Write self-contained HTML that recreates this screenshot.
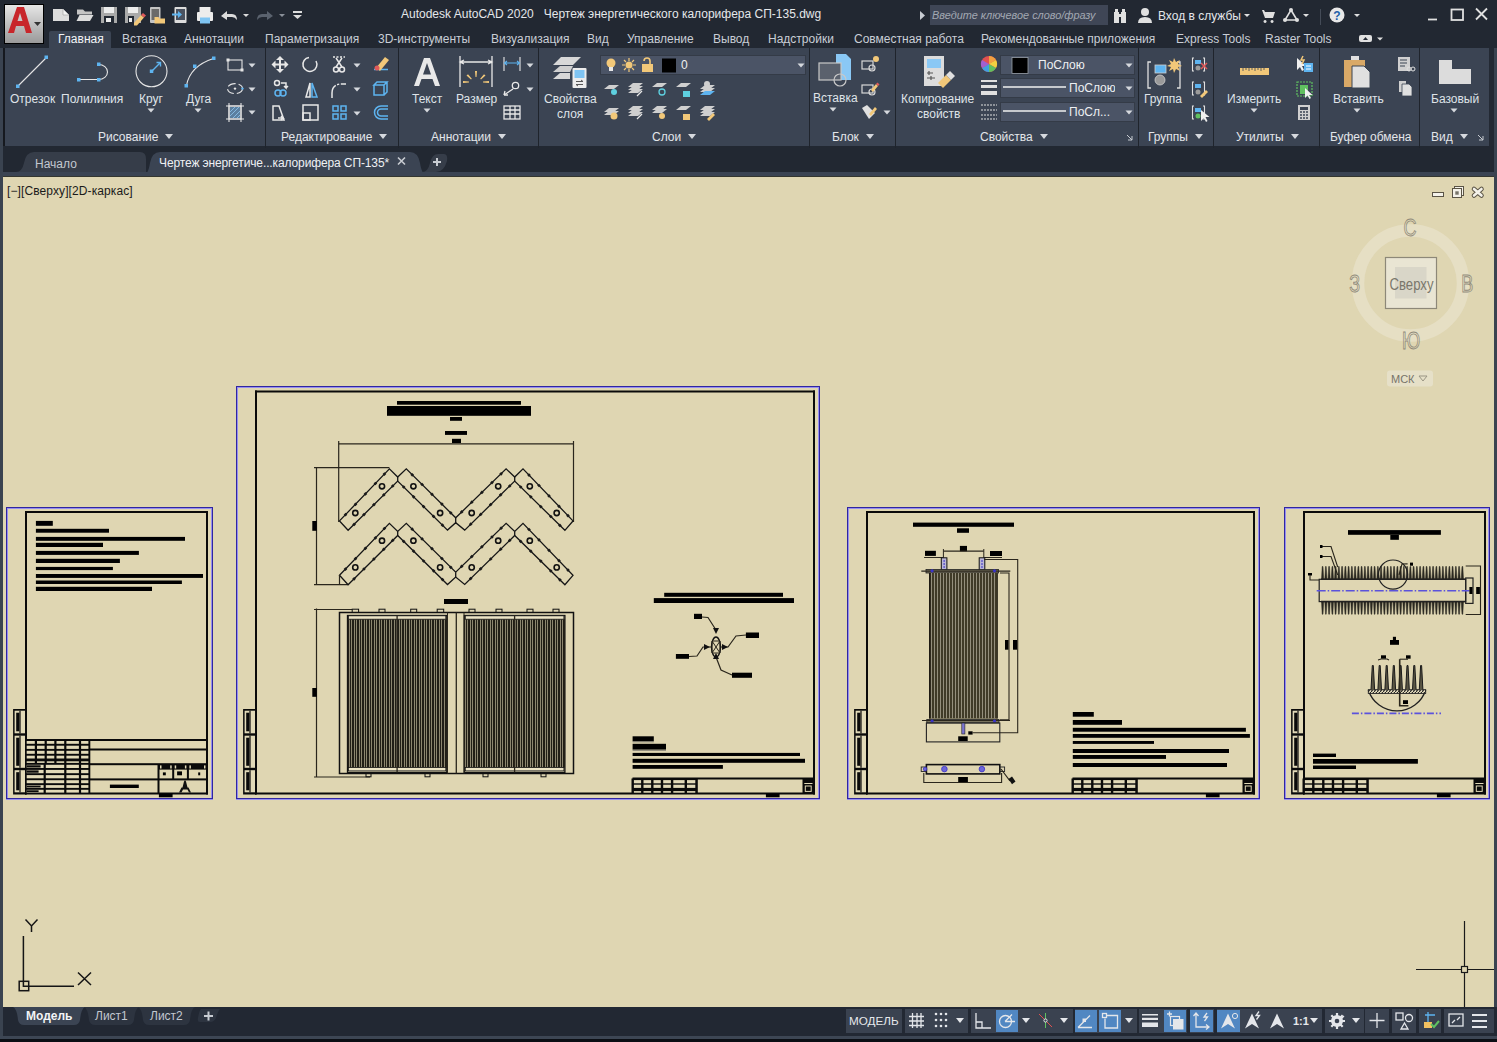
<!DOCTYPE html>
<html><head><meta charset="utf-8">
<style>
*{box-sizing:border-box;margin:0;padding:0}
html,body{width:1497px;height:1042px;overflow:hidden;background:#222832;font-family:"Liberation Sans",sans-serif;font-size:12px;color:#dfe3e8;position:relative}
.a{position:absolute}
.t{position:absolute;white-space:nowrap;line-height:14px}
#leftb{left:0;top:48px;width:3px;height:994px;background:#3a4350}
#ribbon{left:5px;top:48px;width:1484px;height:98px;background:#3b4453}
#ribbonframe{left:3px;top:48px;width:2px;height:98px;background:#16191f}
#ribdark{left:1489px;top:48px;width:5px;height:98px;background:#232933}
#rightb{left:1494px;top:48px;width:3px;height:988px;background:#3a4350}
#band{left:3px;top:146px;width:1494px;height:5px;background:#222832}
#ftabs{left:3px;top:151px;width:1494px;height:26px;background:#222832}
#canvas{left:3px;top:177px;width:1491px;height:830px;background:#dfd6b2;overflow:hidden}
#canright{left:1494px;top:177px;width:3px;height:830px;background:#3a4350}
#stat{left:3px;top:1007px;width:1494px;height:29px;background:#222833}
#stat2{left:0;top:1036px;width:1497px;height:3px;background:#3d4654}
#stat3{left:0;top:1039px;width:1497px;height:3px;background:#0b0e14}
.sep{position:absolute;top:48px;width:1px;height:100px;background:#1f242c}
.pl{position:absolute;top:130px;white-space:nowrap;line-height:14px;color:#e3e6ea}
.arr{display:inline-block;width:0;height:0;border-left:4.5px solid transparent;border-right:4.5px solid transparent;border-top:5px solid #d6d9de;vertical-align:middle;margin-left:7px;position:relative;top:-1px}
</style></head><body>
<div id="leftb" class="a"></div>
<div id="ribbon" class="a"></div>
<div id="ribbonframe" class="a"></div>
<div id="ribdark" class="a"></div>
<div id="band" class="a"></div>
<div id="ftabs" class="a"></div>
<div id="canvas" class="a"></div>
<!--CANVAS--><svg class="a" style="left:0;top:0" width="1497" height="1042" viewBox="0 0 1497 1042"><rect x="7.0" y="508.0" width="205.0" height="1.0" fill="#968ef0"/><rect x="7.0" y="508.0" width="1.0" height="290.0" fill="#968ef0"/><rect x="211.0" y="508.0" width="1.0" height="290.0" fill="#968ef0"/><rect x="6.0" y="799.0" width="207.0" height="1.0" fill="#968ef0"/><rect x="6.0" y="507.0" width="207.0" height="1.0" fill="#3026a0"/><rect x="6.0" y="507.0" width="1.0" height="292.0" fill="#3026a0"/><rect x="212.0" y="507.0" width="1.0" height="292.0" fill="#3026a0"/><rect x="6.0" y="798.0" width="207.0" height="1.0" fill="#3026a0"/><rect x="25.0" y="511.0" width="183.0" height="2.0" fill="#0a0a0a"/><rect x="25.0" y="511.0" width="2.0" height="283.5" fill="#0a0a0a"/><rect x="206.0" y="511.0" width="2.0" height="283.5" fill="#0a0a0a"/><rect x="25.0" y="792.5" width="183.0" height="2.0" fill="#0a0a0a"/><rect x="13.1" y="709.0" width="12.9" height="85.5" fill="#0a0a0a"/><rect x="14.6" y="710.7" width="10.4" height="22.6" fill="#e2dab8"/><rect x="16.2" y="712.7" width="3.2" height="18.6" fill="#0a0a0a"/><rect x="19.4" y="710.7" width="1.2" height="22.6" fill="#0a0a0a"/><rect x="14.6" y="735.7" width="10.4" height="32.1" fill="#e2dab8"/><rect x="16.2" y="737.7" width="3.2" height="28.1" fill="#0a0a0a"/><rect x="19.4" y="735.7" width="1.2" height="32.1" fill="#0a0a0a"/><rect x="14.6" y="770.2" width="10.4" height="22.1" fill="#e2dab8"/><rect x="16.2" y="772.2" width="3.2" height="18.1" fill="#0a0a0a"/><rect x="19.4" y="770.2" width="1.2" height="22.1" fill="#0a0a0a"/><rect x="26.0" y="739.0" width="181.0" height="2.0" fill="#0a0a0a"/><rect x="25.5" y="740.0" width="64.8" height="53.5" fill="#0a0a0a"/><rect x="26.7" y="741.0" width="8.1" height="2.8" fill="#e2dab8"/><rect x="37.0" y="741.0" width="7.6" height="2.8" fill="#e2dab8"/><rect x="46.8" y="741.0" width="7.5" height="2.8" fill="#e2dab8"/><rect x="56.5" y="741.0" width="7.7" height="2.8" fill="#e2dab8"/><rect x="66.4" y="741.0" width="12.5" height="2.8" fill="#e2dab8"/><rect x="81.1" y="741.0" width="7.3" height="2.8" fill="#e2dab8"/><rect x="26.7" y="745.7" width="8.1" height="3.2" fill="#e2dab8"/><rect x="37.0" y="745.7" width="7.6" height="3.2" fill="#e2dab8"/><rect x="46.8" y="745.7" width="7.5" height="3.2" fill="#e2dab8"/><rect x="56.5" y="745.7" width="7.7" height="3.2" fill="#e2dab8"/><rect x="66.4" y="745.7" width="12.5" height="3.2" fill="#e2dab8"/><rect x="81.1" y="745.7" width="7.3" height="3.2" fill="#e2dab8"/><rect x="26.7" y="750.8" width="8.1" height="3.0" fill="#e2dab8"/><rect x="37.0" y="750.8" width="7.6" height="3.0" fill="#e2dab8"/><rect x="46.8" y="750.8" width="7.5" height="3.0" fill="#e2dab8"/><rect x="56.5" y="750.8" width="7.7" height="3.0" fill="#e2dab8"/><rect x="66.4" y="750.8" width="12.5" height="3.0" fill="#e2dab8"/><rect x="81.1" y="750.8" width="7.3" height="3.0" fill="#e2dab8"/><rect x="26.7" y="755.7" width="8.1" height="2.8" fill="#e2dab8"/><rect x="37.0" y="755.7" width="7.6" height="2.8" fill="#e2dab8"/><rect x="46.8" y="755.7" width="7.5" height="2.8" fill="#e2dab8"/><rect x="56.5" y="755.7" width="7.7" height="2.8" fill="#e2dab8"/><rect x="66.4" y="755.7" width="12.5" height="2.8" fill="#e2dab8"/><rect x="81.1" y="755.7" width="7.3" height="2.8" fill="#e2dab8"/><rect x="26.7" y="761.3" width="8.1" height="1.6" fill="#e2dab8"/><rect x="37.0" y="761.3" width="7.6" height="1.6" fill="#e2dab8"/><rect x="46.8" y="761.3" width="7.5" height="1.6" fill="#e2dab8"/><rect x="56.5" y="761.3" width="7.7" height="1.6" fill="#e2dab8"/><rect x="66.4" y="761.3" width="12.5" height="1.6" fill="#e2dab8"/><rect x="81.1" y="761.3" width="7.3" height="1.6" fill="#e2dab8"/><rect x="26.7" y="764.8" width="16.9" height="3.2" fill="#e2dab8"/><rect x="26.7" y="765.3" width="13.9" height="2.2" fill="#0a0a0a"/><rect x="45.8" y="764.8" width="18.4" height="3.2" fill="#e2dab8"/><rect x="66.4" y="764.8" width="12.5" height="3.2" fill="#e2dab8"/><rect x="81.1" y="764.8" width="7.3" height="3.2" fill="#e2dab8"/><rect x="26.7" y="769.9" width="16.9" height="3.3" fill="#e2dab8"/><rect x="26.7" y="770.4" width="11.9" height="2.3" fill="#0a0a0a"/><rect x="45.8" y="769.9" width="18.4" height="3.3" fill="#e2dab8"/><rect x="66.4" y="769.9" width="12.5" height="3.3" fill="#e2dab8"/><rect x="81.1" y="769.9" width="7.3" height="3.3" fill="#e2dab8"/><rect x="26.7" y="775.1" width="16.9" height="3.2" fill="#e2dab8"/><rect x="45.8" y="775.1" width="18.4" height="3.2" fill="#e2dab8"/><rect x="66.4" y="775.1" width="12.5" height="3.2" fill="#e2dab8"/><rect x="81.1" y="775.1" width="7.3" height="3.2" fill="#e2dab8"/><rect x="26.7" y="780.2" width="16.9" height="3.0" fill="#e2dab8"/><rect x="45.8" y="780.2" width="18.4" height="3.0" fill="#e2dab8"/><rect x="66.4" y="780.2" width="12.5" height="3.0" fill="#e2dab8"/><rect x="81.1" y="780.2" width="7.3" height="3.0" fill="#e2dab8"/><rect x="26.7" y="785.1" width="16.9" height="2.8" fill="#e2dab8"/><rect x="26.7" y="785.6" width="13.9" height="1.8" fill="#0a0a0a"/><rect x="45.8" y="785.1" width="18.4" height="2.8" fill="#e2dab8"/><rect x="66.4" y="785.1" width="12.5" height="2.8" fill="#e2dab8"/><rect x="81.1" y="785.1" width="7.3" height="2.8" fill="#e2dab8"/><rect x="26.7" y="789.8" width="16.9" height="2.8" fill="#e2dab8"/><rect x="26.7" y="790.3" width="11.9" height="1.8" fill="#0a0a0a"/><rect x="45.8" y="789.8" width="18.4" height="2.8" fill="#e2dab8"/><rect x="66.4" y="789.8" width="12.5" height="2.8" fill="#e2dab8"/><rect x="81.1" y="789.8" width="7.3" height="2.8" fill="#e2dab8"/><rect x="89.3" y="748.5" width="117.7" height="2.0" fill="#0a0a0a"/><rect x="89.3" y="763.2" width="117.7" height="2.0" fill="#0a0a0a"/><rect x="89.3" y="778.4" width="117.7" height="2.0" fill="#0a0a0a"/><rect x="157.5" y="764.2" width="2.0" height="29.3" fill="#0a0a0a"/><rect x="158.5" y="764.2" width="48.5" height="5.4" fill="#0a0a0a"/><rect x="172.2" y="764.2" width="2.0" height="15.2" fill="#0a0a0a"/><rect x="160.0" y="765.4" width="1.5" height="3.1" fill="#e2dab8"/><rect x="170.2" y="765.4" width="1.5" height="3.1" fill="#e2dab8"/><rect x="186.9" y="764.2" width="2.0" height="15.2" fill="#0a0a0a"/><rect x="174.7" y="765.4" width="1.5" height="3.1" fill="#e2dab8"/><rect x="184.9" y="765.4" width="1.5" height="3.1" fill="#e2dab8"/><rect x="206.0" y="764.2" width="2.0" height="15.2" fill="#0a0a0a"/><rect x="189.4" y="765.4" width="1.5" height="3.1" fill="#e2dab8"/><rect x="204.0" y="765.4" width="1.5" height="3.1" fill="#e2dab8"/><rect x="162.9" y="772.4" width="2.9" height="2.9" fill="#000"/><rect x="177.1" y="771.4" width="4.9" height="3.9" fill="#000"/><rect x="198.2" y="772.4" width="2.0" height="2.9" fill="#000"/><rect x="109.9" y="784.6" width="28.9" height="3.4" fill="#000"/><path d="M179.0 792.5 l2.5 -5 h1 l1.5 -6 l1 -1.5 l1 1.5 l1.5 6 h1 l2.5 5 h-2 l-1.5 -3 h-4.5 l-1.5 3z" fill="#111"/><rect x="158.9" y="793.5" width="13.7" height="3.8" fill="#000"/><rect x="35.9" y="520.9" width="16.9" height="4.9" fill="#000"/><rect x="35.9" y="528.8" width="73.1" height="3.9" fill="#000"/><rect x="35.9" y="536.9" width="149.1" height="3.9" fill="#000"/><rect x="35.9" y="542.8" width="67.1" height="4.2" fill="#000"/><rect x="35.9" y="550.9" width="103.0" height="4.0" fill="#000"/><rect x="35.9" y="558.8" width="84.0" height="4.2" fill="#000"/><rect x="35.9" y="566.9" width="77.0" height="3.2" fill="#000"/><rect x="35.9" y="574.0" width="167.1" height="3.9" fill="#000"/><rect x="35.9" y="580.5" width="146.0" height="3.5" fill="#000"/><rect x="35.9" y="586.8" width="116.1" height="4.2" fill="#000"/><rect x="237.0" y="387.0" width="582.0" height="1.0" fill="#968ef0"/><rect x="237.0" y="387.0" width="1.0" height="411.0" fill="#968ef0"/><rect x="818.0" y="387.0" width="1.0" height="411.0" fill="#968ef0"/><rect x="236.0" y="799.0" width="584.0" height="1.0" fill="#968ef0"/><rect x="236.0" y="386.0" width="584.0" height="1.0" fill="#3026a0"/><rect x="236.0" y="386.0" width="1.0" height="413.0" fill="#3026a0"/><rect x="819.0" y="386.0" width="1.0" height="413.0" fill="#3026a0"/><rect x="236.0" y="798.0" width="584.0" height="1.0" fill="#3026a0"/><rect x="255.0" y="390.5" width="560.0" height="2.0" fill="#0a0a0a"/><rect x="255.0" y="390.5" width="2.0" height="404.0" fill="#0a0a0a"/><rect x="813.0" y="390.5" width="2.0" height="404.0" fill="#0a0a0a"/><rect x="255.0" y="792.5" width="560.0" height="2.0" fill="#0a0a0a"/><rect x="243.1" y="709.0" width="12.9" height="85.5" fill="#0a0a0a"/><rect x="244.6" y="710.7" width="10.4" height="22.6" fill="#e2dab8"/><rect x="246.2" y="712.7" width="3.2" height="18.6" fill="#0a0a0a"/><rect x="249.4" y="710.7" width="1.2" height="22.6" fill="#0a0a0a"/><rect x="244.6" y="735.7" width="10.4" height="32.1" fill="#e2dab8"/><rect x="246.2" y="737.7" width="3.2" height="28.1" fill="#0a0a0a"/><rect x="249.4" y="735.7" width="1.2" height="32.1" fill="#0a0a0a"/><rect x="244.6" y="770.2" width="10.4" height="22.1" fill="#e2dab8"/><rect x="246.2" y="772.2" width="3.2" height="18.1" fill="#0a0a0a"/><rect x="249.4" y="770.2" width="1.2" height="22.1" fill="#0a0a0a"/><rect x="632.5" y="777.5" width="181.5" height="2.0" fill="#0a0a0a"/><rect x="631.5" y="778.5" width="66.3" height="15.0" fill="#0a0a0a"/><rect x="633.9" y="780.1" width="7.2" height="3.2" fill="#e2dab8"/><rect x="633.9" y="784.7" width="7.2" height="3.2" fill="#e2dab8"/><rect x="633.9" y="791.1" width="7.2" height="1.6" fill="#e2dab8"/><rect x="643.5" y="780.1" width="7.6" height="3.2" fill="#e2dab8"/><rect x="643.5" y="784.7" width="7.6" height="3.2" fill="#e2dab8"/><rect x="643.5" y="791.1" width="7.6" height="1.6" fill="#e2dab8"/><rect x="653.5" y="780.1" width="7.3" height="3.2" fill="#e2dab8"/><rect x="653.5" y="784.7" width="7.3" height="3.2" fill="#e2dab8"/><rect x="653.5" y="791.1" width="7.3" height="1.6" fill="#e2dab8"/><rect x="663.2" y="780.1" width="7.7" height="3.2" fill="#e2dab8"/><rect x="663.2" y="784.7" width="7.7" height="3.2" fill="#e2dab8"/><rect x="663.2" y="791.1" width="7.7" height="1.6" fill="#e2dab8"/><rect x="673.3" y="780.1" width="11.3" height="3.2" fill="#e2dab8"/><rect x="673.3" y="784.7" width="11.3" height="3.2" fill="#e2dab8"/><rect x="673.3" y="791.1" width="11.3" height="1.6" fill="#e2dab8"/><rect x="687.0" y="780.1" width="8.3" height="3.2" fill="#e2dab8"/><rect x="687.0" y="784.7" width="8.3" height="3.2" fill="#e2dab8"/><rect x="687.0" y="791.1" width="8.3" height="1.6" fill="#e2dab8"/><rect x="802.5" y="778.5" width="11.5" height="15.0" fill="#0a0a0a"/><rect x="804.3" y="783.0" width="8.2" height="1.0" fill="#e2dab8"/><rect x="805.3" y="786.0" width="5.9" height="5.4" fill="none" stroke="#e2dab8" stroke-width="1"/><rect x="765.9" y="793.5" width="13.7" height="3.8" fill="#000"/><rect x="397.0" y="401.0" width="124.0" height="3.7" fill="#000"/><rect x="387.0" y="406.0" width="144.0" height="9.8" fill="#000"/><rect x="450.0" y="417.0" width="12.0" height="3.8" fill="#000"/><rect x="445.0" y="431.0" width="22.0" height="3.9" fill="#000"/><rect x="452.0" y="438.8" width="9.0" height="4.2" fill="#000"/><path d="M338.7 443.8 L573.5 443.8" stroke="#2a261c" stroke-width="1.2" fill="none" /><path d="M338.7 441.0 L338.7 522.0" stroke="#2a261c" stroke-width="1.2" fill="none" /><path d="M573.5 441.0 L573.5 522.0" stroke="#2a261c" stroke-width="1.2" fill="none" /><path d="M316.5 467.7 L316.5 584.6" stroke="#2a261c" stroke-width="1.2" fill="none" /><path d="M314.0 467.7 L389.4 467.7" stroke="#2a261c" stroke-width="1.2" fill="none" /><path d="M314.0 584.6 L348.0 584.6" stroke="#2a261c" stroke-width="1.2" fill="none" /><rect x="312.3" y="521.0" width="4.5" height="9.8" fill="#000"/><path d="M339.5 520.9 L389.4 468.9 L397.7 477.0 L406.3 468.9 L455.7 517.8 L506.1 468.9 L514.7 477.0 L523.0 468.9 L573.0 520.9 L564.9 530.3 L514.7 481.1 L464.7 530.1 L455.7 522.7 L447.5 530.1 L397.7 481.1 L348.1 530.3Z" fill="none" stroke="#151515" stroke-width="1.3" stroke-linejoin="miter"/><path d="M397.7 477.0 L397.7 481.1" stroke="#151515" stroke-width="1.3" fill="none" /><path d="M455.7 517.8 L455.7 522.7" stroke="#151515" stroke-width="1.3" fill="none" /><path d="M514.7 477.0 L514.7 481.1" stroke="#151515" stroke-width="1.3" fill="none" /><circle cx="382" cy="486.3" r="2.6" fill="none" stroke="#111" stroke-width="1.6"/><circle cx="355.3" cy="513" r="2.6" fill="none" stroke="#111" stroke-width="1.6"/><circle cx="413.4" cy="486.3" r="2.6" fill="none" stroke="#111" stroke-width="1.6"/><circle cx="440.1" cy="513" r="2.6" fill="none" stroke="#111" stroke-width="1.6"/><circle cx="498.2" cy="486.3" r="2.6" fill="none" stroke="#111" stroke-width="1.6"/><circle cx="471.7" cy="513" r="2.6" fill="none" stroke="#111" stroke-width="1.6"/><circle cx="529.8" cy="486.3" r="2.6" fill="none" stroke="#111" stroke-width="1.6"/><circle cx="556.7" cy="513" r="2.6" fill="none" stroke="#111" stroke-width="1.6"/><rect x="344.2" y="513.4" width="2.6" height="2.6" fill="#1a1a1a" transform="rotate(45 345.5 514.7)"/><rect x="354.2" y="503.0" width="2.6" height="2.6" fill="#1a1a1a" transform="rotate(45 355.5 504.3)"/><rect x="364.1" y="492.6" width="2.6" height="2.6" fill="#1a1a1a" transform="rotate(45 365.4 493.9)"/><rect x="374.1" y="482.2" width="2.6" height="2.6" fill="#1a1a1a" transform="rotate(45 375.4 483.5)"/><rect x="383.1" y="472.8" width="2.6" height="2.6" fill="#1a1a1a" transform="rotate(45 384.4 474.1)"/><rect x="352.8" y="523.1" width="2.6" height="2.6" fill="#1a1a1a" transform="rotate(45 354.1 524.4)"/><rect x="362.7" y="513.3" width="2.6" height="2.6" fill="#1a1a1a" transform="rotate(45 364.0 514.6)"/><rect x="372.6" y="503.4" width="2.6" height="2.6" fill="#1a1a1a" transform="rotate(45 373.9 504.7)"/><rect x="382.5" y="493.6" width="2.6" height="2.6" fill="#1a1a1a" transform="rotate(45 383.8 494.9)"/><rect x="391.4" y="484.7" width="2.6" height="2.6" fill="#1a1a1a" transform="rotate(45 392.7 486.0)"/><rect x="410.9" y="473.5" width="2.6" height="2.6" fill="#1a1a1a" transform="rotate(45 412.2 474.8)"/><rect x="420.8" y="483.2" width="2.6" height="2.6" fill="#1a1a1a" transform="rotate(45 422.1 484.5)"/><rect x="430.7" y="493.0" width="2.6" height="2.6" fill="#1a1a1a" transform="rotate(45 432.0 494.3)"/><rect x="440.6" y="502.8" width="2.6" height="2.6" fill="#1a1a1a" transform="rotate(45 441.9 504.1)"/><rect x="449.5" y="511.6" width="2.6" height="2.6" fill="#1a1a1a" transform="rotate(45 450.8 512.9)"/><rect x="402.4" y="485.7" width="2.6" height="2.6" fill="#1a1a1a" transform="rotate(45 403.7 487.0)"/><rect x="412.3" y="495.5" width="2.6" height="2.6" fill="#1a1a1a" transform="rotate(45 413.6 496.8)"/><rect x="422.3" y="505.3" width="2.6" height="2.6" fill="#1a1a1a" transform="rotate(45 423.6 506.6)"/><rect x="432.3" y="515.1" width="2.6" height="2.6" fill="#1a1a1a" transform="rotate(45 433.6 516.4)"/><rect x="441.2" y="523.9" width="2.6" height="2.6" fill="#1a1a1a" transform="rotate(45 442.5 525.2)"/><rect x="460.4" y="510.6" width="2.6" height="2.6" fill="#1a1a1a" transform="rotate(45 461.7 511.9)"/><rect x="470.5" y="500.9" width="2.6" height="2.6" fill="#1a1a1a" transform="rotate(45 471.8 502.2)"/><rect x="480.6" y="491.1" width="2.6" height="2.6" fill="#1a1a1a" transform="rotate(45 481.9 492.4)"/><rect x="490.7" y="481.3" width="2.6" height="2.6" fill="#1a1a1a" transform="rotate(45 492.0 482.6)"/><rect x="499.8" y="472.5" width="2.6" height="2.6" fill="#1a1a1a" transform="rotate(45 501.1 473.8)"/><rect x="469.4" y="522.9" width="2.6" height="2.6" fill="#1a1a1a" transform="rotate(45 470.7 524.2)"/><rect x="479.4" y="513.1" width="2.6" height="2.6" fill="#1a1a1a" transform="rotate(45 480.7 514.4)"/><rect x="489.4" y="503.3" width="2.6" height="2.6" fill="#1a1a1a" transform="rotate(45 490.7 504.6)"/><rect x="499.4" y="493.5" width="2.6" height="2.6" fill="#1a1a1a" transform="rotate(45 500.7 494.8)"/><rect x="508.4" y="484.7" width="2.6" height="2.6" fill="#1a1a1a" transform="rotate(45 509.7 486.0)"/><rect x="527.7" y="473.8" width="2.6" height="2.6" fill="#1a1a1a" transform="rotate(45 529.0 475.1)"/><rect x="537.7" y="484.2" width="2.6" height="2.6" fill="#1a1a1a" transform="rotate(45 539.0 485.5)"/><rect x="547.7" y="494.6" width="2.6" height="2.6" fill="#1a1a1a" transform="rotate(45 549.0 495.9)"/><rect x="557.7" y="505.0" width="2.6" height="2.6" fill="#1a1a1a" transform="rotate(45 559.0 506.3)"/><rect x="566.7" y="514.4" width="2.6" height="2.6" fill="#1a1a1a" transform="rotate(45 568.0 515.7)"/><rect x="519.4" y="485.7" width="2.6" height="2.6" fill="#1a1a1a" transform="rotate(45 520.7 487.0)"/><rect x="529.5" y="495.5" width="2.6" height="2.6" fill="#1a1a1a" transform="rotate(45 530.8 496.8)"/><rect x="539.5" y="505.4" width="2.6" height="2.6" fill="#1a1a1a" transform="rotate(45 540.8 506.7)"/><rect x="549.5" y="515.2" width="2.6" height="2.6" fill="#1a1a1a" transform="rotate(45 550.8 516.5)"/><rect x="558.6" y="524.1" width="2.6" height="2.6" fill="#1a1a1a" transform="rotate(45 559.9 525.4)"/><path d="M339.5 575.3 L389.4 523.3 L397.7 531.4 L406.3 523.3 L455.7 572.2 L506.1 523.3 L514.7 531.4 L523.0 523.3 L573.0 575.3 L564.9 584.7 L514.7 535.5 L464.7 584.5 L455.7 577.1 L447.5 584.5 L397.7 535.5 L348.1 584.7Z" fill="none" stroke="#151515" stroke-width="1.3" stroke-linejoin="miter"/><path d="M397.7 531.4 L397.7 535.5" stroke="#151515" stroke-width="1.3" fill="none" /><path d="M455.7 572.2 L455.7 577.1" stroke="#151515" stroke-width="1.3" fill="none" /><path d="M514.7 531.4 L514.7 535.5" stroke="#151515" stroke-width="1.3" fill="none" /><circle cx="382" cy="540.7" r="2.6" fill="none" stroke="#111" stroke-width="1.6"/><circle cx="355.3" cy="567.4" r="2.6" fill="none" stroke="#111" stroke-width="1.6"/><circle cx="413.4" cy="540.7" r="2.6" fill="none" stroke="#111" stroke-width="1.6"/><circle cx="440.1" cy="567.4" r="2.6" fill="none" stroke="#111" stroke-width="1.6"/><circle cx="498.2" cy="540.7" r="2.6" fill="none" stroke="#111" stroke-width="1.6"/><circle cx="471.7" cy="567.4" r="2.6" fill="none" stroke="#111" stroke-width="1.6"/><circle cx="529.8" cy="540.7" r="2.6" fill="none" stroke="#111" stroke-width="1.6"/><circle cx="556.7" cy="567.4" r="2.6" fill="none" stroke="#111" stroke-width="1.6"/><rect x="344.2" y="567.8" width="2.6" height="2.6" fill="#1a1a1a" transform="rotate(45 345.5 569.1)"/><rect x="354.2" y="557.4" width="2.6" height="2.6" fill="#1a1a1a" transform="rotate(45 355.5 558.7)"/><rect x="364.1" y="547.0" width="2.6" height="2.6" fill="#1a1a1a" transform="rotate(45 365.4 548.3)"/><rect x="374.1" y="536.6" width="2.6" height="2.6" fill="#1a1a1a" transform="rotate(45 375.4 537.9)"/><rect x="383.1" y="527.2" width="2.6" height="2.6" fill="#1a1a1a" transform="rotate(45 384.4 528.5)"/><rect x="352.8" y="577.5" width="2.6" height="2.6" fill="#1a1a1a" transform="rotate(45 354.1 578.8)"/><rect x="362.7" y="567.7" width="2.6" height="2.6" fill="#1a1a1a" transform="rotate(45 364.0 569.0)"/><rect x="372.6" y="557.8" width="2.6" height="2.6" fill="#1a1a1a" transform="rotate(45 373.9 559.1)"/><rect x="382.5" y="548.0" width="2.6" height="2.6" fill="#1a1a1a" transform="rotate(45 383.8 549.3)"/><rect x="391.4" y="539.1" width="2.6" height="2.6" fill="#1a1a1a" transform="rotate(45 392.7 540.4)"/><rect x="410.9" y="527.9" width="2.6" height="2.6" fill="#1a1a1a" transform="rotate(45 412.2 529.2)"/><rect x="420.8" y="537.6" width="2.6" height="2.6" fill="#1a1a1a" transform="rotate(45 422.1 538.9)"/><rect x="430.7" y="547.4" width="2.6" height="2.6" fill="#1a1a1a" transform="rotate(45 432.0 548.7)"/><rect x="440.6" y="557.2" width="2.6" height="2.6" fill="#1a1a1a" transform="rotate(45 441.9 558.5)"/><rect x="449.5" y="566.0" width="2.6" height="2.6" fill="#1a1a1a" transform="rotate(45 450.8 567.3)"/><rect x="402.4" y="540.1" width="2.6" height="2.6" fill="#1a1a1a" transform="rotate(45 403.7 541.4)"/><rect x="412.3" y="549.9" width="2.6" height="2.6" fill="#1a1a1a" transform="rotate(45 413.6 551.2)"/><rect x="422.3" y="559.7" width="2.6" height="2.6" fill="#1a1a1a" transform="rotate(45 423.6 561.0)"/><rect x="432.3" y="569.5" width="2.6" height="2.6" fill="#1a1a1a" transform="rotate(45 433.6 570.8)"/><rect x="441.2" y="578.3" width="2.6" height="2.6" fill="#1a1a1a" transform="rotate(45 442.5 579.6)"/><rect x="460.4" y="565.0" width="2.6" height="2.6" fill="#1a1a1a" transform="rotate(45 461.7 566.3)"/><rect x="470.5" y="555.3" width="2.6" height="2.6" fill="#1a1a1a" transform="rotate(45 471.8 556.6)"/><rect x="480.6" y="545.5" width="2.6" height="2.6" fill="#1a1a1a" transform="rotate(45 481.9 546.8)"/><rect x="490.7" y="535.7" width="2.6" height="2.6" fill="#1a1a1a" transform="rotate(45 492.0 537.0)"/><rect x="499.8" y="526.9" width="2.6" height="2.6" fill="#1a1a1a" transform="rotate(45 501.1 528.2)"/><rect x="469.4" y="577.3" width="2.6" height="2.6" fill="#1a1a1a" transform="rotate(45 470.7 578.6)"/><rect x="479.4" y="567.5" width="2.6" height="2.6" fill="#1a1a1a" transform="rotate(45 480.7 568.8)"/><rect x="489.4" y="557.7" width="2.6" height="2.6" fill="#1a1a1a" transform="rotate(45 490.7 559.0)"/><rect x="499.4" y="547.9" width="2.6" height="2.6" fill="#1a1a1a" transform="rotate(45 500.7 549.2)"/><rect x="508.4" y="539.1" width="2.6" height="2.6" fill="#1a1a1a" transform="rotate(45 509.7 540.4)"/><rect x="527.7" y="528.2" width="2.6" height="2.6" fill="#1a1a1a" transform="rotate(45 529.0 529.5)"/><rect x="537.7" y="538.6" width="2.6" height="2.6" fill="#1a1a1a" transform="rotate(45 539.0 539.9)"/><rect x="547.7" y="549.0" width="2.6" height="2.6" fill="#1a1a1a" transform="rotate(45 549.0 550.3)"/><rect x="557.7" y="559.4" width="2.6" height="2.6" fill="#1a1a1a" transform="rotate(45 559.0 560.7)"/><rect x="566.7" y="568.8" width="2.6" height="2.6" fill="#1a1a1a" transform="rotate(45 568.0 570.1)"/><rect x="519.4" y="540.1" width="2.6" height="2.6" fill="#1a1a1a" transform="rotate(45 520.7 541.4)"/><rect x="529.5" y="549.9" width="2.6" height="2.6" fill="#1a1a1a" transform="rotate(45 530.8 551.2)"/><rect x="539.5" y="559.8" width="2.6" height="2.6" fill="#1a1a1a" transform="rotate(45 540.8 561.1)"/><rect x="549.5" y="569.6" width="2.6" height="2.6" fill="#1a1a1a" transform="rotate(45 550.8 570.9)"/><rect x="558.6" y="578.5" width="2.6" height="2.6" fill="#1a1a1a" transform="rotate(45 559.9 579.8)"/><path d="M339.5 575.0 L339.5 584.6" stroke="#2a261c" stroke-width="1.2" fill="none" /><rect x="444.0" y="599.0" width="24.0" height="5.0" fill="#000"/><path d="M316.5 608.5 L316.5 777.0" stroke="#2a261c" stroke-width="1.2" fill="none" /><path d="M314.0 609.5 L352.0 609.5" stroke="#2a261c" stroke-width="1.1" fill="none" /><path d="M314.0 777.0 L370.0 777.0" stroke="#2a261c" stroke-width="1.1" fill="none" /><rect x="312.3" y="688.0" width="4.5" height="8.8" fill="#000"/><defs><pattern id="fins" width="4.8" height="10" patternUnits="userSpaceOnUse"><rect width="4.8" height="10" fill="#24211a"/><rect x="0.6" width="0.8" height="10" fill="#8c866e"/><rect x="3.0" width="0.8" height="10" fill="#6f6a56"/></pattern><pattern id="fins2" width="3.4" height="10" patternUnits="userSpaceOnUse"><rect width="3.4" height="10" fill="#4a4637"/><rect x="1.2" width="1.1" height="10" fill="#a8a28a"/></pattern><pattern id="fins3" width="3.2" height="6" patternUnits="userSpaceOnUse"><path d="M0.3 6 L1.2 0 L2 6Z" fill="#2a281f"/></pattern><pattern id="hatch" width="3" height="4" patternUnits="userSpaceOnUse"><rect width="3" height="4" fill="#e8e0c0"/><path d="M0 4 L3 0" stroke="#222" stroke-width="1.2"/></pattern></defs><rect x="339.5" y="612.5" width="234" height="161" fill="none" stroke="#111" stroke-width="1.5"/><rect x="352.2" y="609.2" width="6.400000000000034" height="3.3" fill="none" stroke="#111" stroke-width="1"/><rect x="379" y="609.2" width="6" height="3.3" fill="none" stroke="#111" stroke-width="1"/><rect x="410.7" y="609.2" width="6.0" height="3.3" fill="none" stroke="#111" stroke-width="1"/><rect x="437.2" y="609.2" width="6.5" height="3.3" fill="none" stroke="#111" stroke-width="1"/><rect x="469" y="609.2" width="6" height="3.3" fill="none" stroke="#111" stroke-width="1"/><rect x="496" y="609.2" width="6" height="3.3" fill="none" stroke="#111" stroke-width="1"/><rect x="527" y="609.2" width="6" height="3.3" fill="none" stroke="#111" stroke-width="1"/><rect x="553" y="609.2" width="6" height="3.3" fill="none" stroke="#111" stroke-width="1"/><rect x="366" y="773.5" width="5" height="3.3" fill="none" stroke="#111" stroke-width="1"/><rect x="425" y="773.5" width="5" height="3.3" fill="none" stroke="#111" stroke-width="1"/><rect x="483" y="773.5" width="5" height="3.3" fill="none" stroke="#111" stroke-width="1"/><rect x="541" y="773.5" width="5" height="3.3" fill="none" stroke="#111" stroke-width="1"/><rect x="347.5" y="614.5" width="99.3" height="160.5" fill="none"/><rect x="347.5" y="615.5" width="99.30000000000001" height="157" fill="none" stroke="#111" stroke-width="1.3"/><rect x="347.5" y="619.2" width="99.3" height="148.3" fill="#211e16"/><path d="M349.5 619.2 V767.5 M351.5 619.2 V767.5 M354.5 619.2 V767.5 M356.5 619.2 V767.5 M359.5 619.2 V767.5 M361.5 619.2 V767.5 M364.5 619.2 V767.5 M366.5 619.2 V767.5 M369.5 619.2 V767.5 M371.5 619.2 V767.5 M374.5 619.2 V767.5 M376.5 619.2 V767.5 M379.5 619.2 V767.5 M381.5 619.2 V767.5 M384.5 619.2 V767.5 M386.5 619.2 V767.5 M389.5 619.2 V767.5 M391.5 619.2 V767.5 M394.5 619.2 V767.5 M396.5 619.2 V767.5 M399.5 619.2 V767.5 M401.5 619.2 V767.5 M404.5 619.2 V767.5 M406.5 619.2 V767.5 M409.5 619.2 V767.5 M411.5 619.2 V767.5 M414.5 619.2 V767.5 M416.5 619.2 V767.5 M419.5 619.2 V767.5 M421.5 619.2 V767.5 M424.5 619.2 V767.5 M426.5 619.2 V767.5 M429.5 619.2 V767.5 M431.5 619.2 V767.5 M434.5 619.2 V767.5 M436.5 619.2 V767.5 M439.5 619.2 V767.5 M441.5 619.2 V767.5 M444.5 619.2 V767.5" stroke="#8c866f" stroke-width="1"/><rect x="348.5" y="615.8" width="97.30000000000001" height="3.4" fill="#ece4c6" stroke="#111" stroke-width="0.8"/><rect x="348.5" y="767.5" width="97.30000000000001" height="3.4" fill="#ece4c6" stroke="#111" stroke-width="0.8"/><path d="M397.1 615.5 L397.1 772.5" stroke="#2a261c" stroke-width="1.3" fill="none" /><rect x="464.3" y="614.5" width="100.6" height="160.5" fill="none"/><rect x="464.3" y="615.5" width="100.59999999999997" height="157" fill="none" stroke="#111" stroke-width="1.3"/><rect x="464.3" y="619.2" width="100.6" height="148.3" fill="#211e16"/><path d="M465.5 619.2 V767.5 M467.5 619.2 V767.5 M470.5 619.2 V767.5 M472.5 619.2 V767.5 M475.5 619.2 V767.5 M477.5 619.2 V767.5 M480.5 619.2 V767.5 M482.5 619.2 V767.5 M485.5 619.2 V767.5 M487.5 619.2 V767.5 M490.5 619.2 V767.5 M492.5 619.2 V767.5 M495.5 619.2 V767.5 M497.5 619.2 V767.5 M500.5 619.2 V767.5 M502.5 619.2 V767.5 M505.5 619.2 V767.5 M507.5 619.2 V767.5 M510.5 619.2 V767.5 M512.5 619.2 V767.5 M515.5 619.2 V767.5 M517.5 619.2 V767.5 M520.5 619.2 V767.5 M522.5 619.2 V767.5 M525.5 619.2 V767.5 M527.5 619.2 V767.5 M530.5 619.2 V767.5 M532.5 619.2 V767.5 M535.5 619.2 V767.5 M537.5 619.2 V767.5 M540.5 619.2 V767.5 M542.5 619.2 V767.5 M545.5 619.2 V767.5 M547.5 619.2 V767.5 M550.5 619.2 V767.5 M552.5 619.2 V767.5 M555.5 619.2 V767.5 M557.5 619.2 V767.5 M560.5 619.2 V767.5 M562.5 619.2 V767.5" stroke="#8c866f" stroke-width="1"/><rect x="465.3" y="615.8" width="98.59999999999997" height="3.4" fill="#ece4c6" stroke="#111" stroke-width="0.8"/><rect x="465.3" y="767.5" width="98.59999999999997" height="3.4" fill="#ece4c6" stroke="#111" stroke-width="0.8"/><path d="M514.6 615.5 L514.6 772.5" stroke="#2a261c" stroke-width="1.3" fill="none" /><path d="M456.3 612.5 L456.3 773.5" stroke="#2a261c" stroke-width="1.3" fill="none" /><path d="M447.5 612.5 L447.5 773.5" stroke="#2a261c" stroke-width="1" fill="none" /><path d="M464.0 612.5 L464.0 773.5" stroke="#2a261c" stroke-width="1" fill="none" /><rect x="664.2" y="592.8" width="118.8" height="4.0" fill="#000"/><rect x="653.8" y="598.1" width="140.2" height="4.9" fill="#000"/><ellipse cx="716" cy="647" rx="4.5" ry="10" fill="none" stroke="#111" stroke-width="1.4"/><path d="M712.0 641.0 L720.0 653.0" stroke="#2a261c" stroke-width="1" fill="none" /><path d="M720.0 641.0 L712.0 653.0" stroke="#2a261c" stroke-width="1" fill="none" /><path d="M712.0 641.0 L720.0 641.0 L720.0 653.0 L712.0 653.0 L712.0 641.0" stroke="#2a261c" stroke-width="1" fill="none" /><path d="M696.0 616.5 L708.0 617.5 L716.0 630.0" stroke="#2a261c" stroke-width="1.2" fill="none" /><path d="M713 628 h6 l-3 6z" fill="#111"/><path d="M716.0 657.0 L721.0 670.0 L732.0 675.0" stroke="#2a261c" stroke-width="1.2" fill="none" /><path d="M713 659 h6 l-3 -6z" fill="#111"/><path d="M689.0 656.5 L697.0 656.0 L703.0 647.0 L711.0 647.0" stroke="#2a261c" stroke-width="1.2" fill="none" /><path d="M704 644 v6 l6 -3z" fill="#111"/><path d="M721.0 647.0 L728.0 647.0 L736.0 636.0 L746.0 635.0" stroke="#2a261c" stroke-width="1.2" fill="none" /><path d="M722 644 v6 l6 -3z" fill="#111"/><rect x="694.0" y="613.8" width="8.0" height="5.2" fill="#000"/><rect x="745.9" y="632.5" width="13.1" height="5.5" fill="#000"/><rect x="675.9" y="654.0" width="13.1" height="4.8" fill="#000"/><rect x="732.0" y="672.7" width="20.0" height="5.1" fill="#000"/><rect x="632.6" y="736.3" width="21.2" height="4.9" fill="#000"/><rect x="632.6" y="743.8" width="33.4" height="5.8" fill="#000"/><path d="M632.6 741.8 L653.8 741.8" stroke="#555" stroke-width="0.8" fill="none" /><path d="M632.6 750.2 L666.0 750.2" stroke="#555" stroke-width="0.8" fill="none" /><rect x="632.6" y="752.9" width="167.4" height="3.1" fill="#000"/><rect x="632.6" y="758.8" width="172.4" height="4.0" fill="#000"/><rect x="632.6" y="765.0" width="90.3" height="3.8" fill="#000"/><rect x="848.0" y="508.0" width="411.0" height="1.0" fill="#968ef0"/><rect x="848.0" y="508.0" width="1.0" height="290.0" fill="#968ef0"/><rect x="1258.0" y="508.0" width="1.0" height="290.0" fill="#968ef0"/><rect x="847.0" y="799.0" width="413.0" height="1.0" fill="#968ef0"/><rect x="847.0" y="507.0" width="413.0" height="1.0" fill="#3026a0"/><rect x="847.0" y="507.0" width="1.0" height="292.0" fill="#3026a0"/><rect x="1259.0" y="507.0" width="1.0" height="292.0" fill="#3026a0"/><rect x="847.0" y="798.0" width="413.0" height="1.0" fill="#3026a0"/><rect x="866.0" y="511.0" width="389.0" height="2.0" fill="#0a0a0a"/><rect x="866.0" y="511.0" width="2.0" height="283.5" fill="#0a0a0a"/><rect x="1253.0" y="511.0" width="2.0" height="283.5" fill="#0a0a0a"/><rect x="866.0" y="792.5" width="389.0" height="2.0" fill="#0a0a0a"/><rect x="854.1" y="709.0" width="12.9" height="85.5" fill="#0a0a0a"/><rect x="855.6" y="710.7" width="10.4" height="22.6" fill="#e2dab8"/><rect x="857.2" y="712.7" width="3.2" height="18.6" fill="#0a0a0a"/><rect x="860.4" y="710.7" width="1.2" height="22.6" fill="#0a0a0a"/><rect x="855.6" y="735.7" width="10.4" height="32.1" fill="#e2dab8"/><rect x="857.2" y="737.7" width="3.2" height="28.1" fill="#0a0a0a"/><rect x="860.4" y="735.7" width="1.2" height="32.1" fill="#0a0a0a"/><rect x="855.6" y="770.2" width="10.4" height="22.1" fill="#e2dab8"/><rect x="857.2" y="772.2" width="3.2" height="18.1" fill="#0a0a0a"/><rect x="860.4" y="770.2" width="1.2" height="22.1" fill="#0a0a0a"/><rect x="1072.5" y="777.5" width="181.5" height="2.0" fill="#0a0a0a"/><rect x="1071.5" y="778.5" width="66.3" height="15.0" fill="#0a0a0a"/><rect x="1073.9" y="780.1" width="7.2" height="3.2" fill="#e2dab8"/><rect x="1073.9" y="784.7" width="7.2" height="3.2" fill="#e2dab8"/><rect x="1073.9" y="791.1" width="7.2" height="1.6" fill="#e2dab8"/><rect x="1083.5" y="780.1" width="7.6" height="3.2" fill="#e2dab8"/><rect x="1083.5" y="784.7" width="7.6" height="3.2" fill="#e2dab8"/><rect x="1083.5" y="791.1" width="7.6" height="1.6" fill="#e2dab8"/><rect x="1093.5" y="780.1" width="7.3" height="3.2" fill="#e2dab8"/><rect x="1093.5" y="784.7" width="7.3" height="3.2" fill="#e2dab8"/><rect x="1093.5" y="791.1" width="7.3" height="1.6" fill="#e2dab8"/><rect x="1103.2" y="780.1" width="7.7" height="3.2" fill="#e2dab8"/><rect x="1103.2" y="784.7" width="7.7" height="3.2" fill="#e2dab8"/><rect x="1103.2" y="791.1" width="7.7" height="1.6" fill="#e2dab8"/><rect x="1113.3" y="780.1" width="11.3" height="3.2" fill="#e2dab8"/><rect x="1113.3" y="784.7" width="11.3" height="3.2" fill="#e2dab8"/><rect x="1113.3" y="791.1" width="11.3" height="1.6" fill="#e2dab8"/><rect x="1127.0" y="780.1" width="8.3" height="3.2" fill="#e2dab8"/><rect x="1127.0" y="784.7" width="8.3" height="3.2" fill="#e2dab8"/><rect x="1127.0" y="791.1" width="8.3" height="1.6" fill="#e2dab8"/><rect x="1242.5" y="778.5" width="11.5" height="15.0" fill="#0a0a0a"/><rect x="1244.3" y="783.0" width="8.2" height="1.0" fill="#e2dab8"/><rect x="1245.3" y="786.0" width="5.9" height="5.4" fill="none" stroke="#e2dab8" stroke-width="1"/><rect x="1205.9" y="793.5" width="13.7" height="3.8" fill="#000"/><rect x="913.0" y="522.6" width="101.0" height="4.2" fill="#000"/><rect x="957.0" y="528.3" width="12.0" height="4.5" fill="#000"/><rect x="959.9" y="545.9" width="7.1" height="5.4" fill="#000"/><path d="M943.4 551.1 L983.8 551.1" stroke="#2a261c" stroke-width="1.1" fill="none" /><rect x="925.0" y="550.8" width="10.9" height="5.1" fill="#000"/><path d="M924.1 557.5 L943.0 557.5" stroke="#2a261c" stroke-width="1" fill="none" /><rect x="990.0" y="551.0" width="12.0" height="5.0" fill="#000"/><path d="M984.0 557.5 L1002.0 557.5" stroke="#2a261c" stroke-width="1" fill="none" /><path d="M943.4 549.0 L943.4 560.0" stroke="#2a261c" stroke-width="1" fill="none" /><path d="M983.8 549.0 L983.8 560.0" stroke="#2a261c" stroke-width="1" fill="none" /><rect x="941.3" y="557.8" width="5.6" height="12.3" fill="#b9b5d6" stroke="#111" stroke-width="1"/><path d="M944.1 560.0 L944.1 568.0" stroke="#3a32c8" stroke-width="1" fill="none" stroke-dasharray="2 1"/><rect x="979.2" y="557.8" width="5.6" height="12.3" fill="#b9b5d6" stroke="#111" stroke-width="1"/><path d="M982.0 560.0 L982.0 568.0" stroke="#3a32c8" stroke-width="1" fill="none" stroke-dasharray="2 1"/><rect x="926" y="569.5" width="72.6" height="3.5" fill="#77725c" stroke="#222" stroke-width="0.8"/><path d="M921.3 571.2 L1010.3 571.2" stroke="#2a261c" stroke-width="1.2" fill="none" /><rect x="929.5" y="573.0" width="67.5" height="145.6" fill="#37321f"/><path d="M931.5 573 V718.6 M934.5 573 V718.6 M937.5 573 V718.6 M940.5 573 V718.6 M943.5 573 V718.6 M946.5 573 V718.6 M949.5 573 V718.6 M952.5 573 V718.6 M955.5 573 V718.6 M958.5 573 V718.6 M961.5 573 V718.6 M964.5 573 V718.6 M967.5 573 V718.6 M970.5 573 V718.6 M973.5 573 V718.6 M976.5 573 V718.6 M979.5 573 V718.6 M982.5 573 V718.6 M985.5 573 V718.6 M988.5 573 V718.6 M991.5 573 V718.6 M994.5 573 V718.6" stroke="#948f7c" stroke-width="1.2"/><rect x="929.0" y="573.0" width="1.5" height="145.6" fill="#1e1a12"/><rect x="996.5" y="573.0" width="1.5" height="145.6" fill="#3e3a2a"/><rect x="926.8" y="719.4" width="72.2" height="3.5" fill="#77725c" stroke="#222" stroke-width="0.8"/><path d="M922.0 720.5 L1010.0 720.5" stroke="#2a261c" stroke-width="1.2" fill="none" /><circle cx="932.1" cy="570.8" r="1.6" fill="#3a32c8"/><circle cx="994.5" cy="570.8" r="1.6" fill="#3a32c8"/><circle cx="932.1" cy="721" r="1.6" fill="#3a32c8"/><circle cx="994.5" cy="721" r="1.6" fill="#3a32c8"/><path d="M984.0 559.5 L1017.7 559.5 L1017.7 732.7 L972.6 732.7" stroke="#2a261c" stroke-width="1.1" fill="none" /><path d="M1000.0 573.0 L1009.0 573.0 L1009.0 719.9 L1000.0 719.9" stroke="#2a261c" stroke-width="1.1" fill="none" /><rect x="1005.0" y="640.0" width="3.5" height="9.7" fill="#000"/><rect x="1013.0" y="640.0" width="4.0" height="9.7" fill="#000"/><rect x="926.4" y="723" width="73.4" height="18.9" fill="none" stroke="#222" stroke-width="1.1"/><rect x="961.8" y="723" width="3.1" height="11" fill="#7b74d0" stroke="#222" stroke-width="0.6"/><rect x="958.2" y="736.3" width="9.5" height="4.7" fill="#000"/><rect x="968.3" y="731.3" width="4.3" height="3.3" fill="#000"/><rect x="926.4" y="764.6" width="73.4" height="9.3" fill="none" stroke="#111" stroke-width="1.6"/><rect x="921.2" y="767" width="5.2" height="4.5" fill="none" stroke="#222" stroke-width="0.9"/><rect x="999.8" y="767" width="4.8" height="4.5" fill="none" stroke="#222" stroke-width="0.9"/><path d="M923.8 773.0 L923.8 782.5 L1001.6 782.5 L1001.6 773.0" stroke="#2a261c" stroke-width="1.1" fill="none" /><circle cx="925.1" cy="769.1" r="1.8" fill="#6d66d8" stroke="#3a32c8" stroke-width="0.8"/><circle cx="944.4" cy="769.1" r="2.8" fill="#6d66d8" stroke="#3a32c8" stroke-width="0.8"/><circle cx="981.9" cy="769.1" r="2.8" fill="#6d66d8" stroke="#3a32c8" stroke-width="0.8"/><rect x="958.2" y="777.0" width="9.7" height="5.0" fill="#000"/><path d="M1001.0 769.0 L1010.0 781.0" stroke="#2a261c" stroke-width="1.2" fill="none" /><path d="M1008.5 779 l3.5 -2.5 l3.5 5 l-3.5 2.8z" fill="#111"/><rect x="1072.8" y="712.0" width="21.0" height="4.7" fill="#000"/><rect x="1072.8" y="720.0" width="49.2" height="4.8" fill="#000"/><rect x="1072.8" y="727.8" width="173.1" height="3.9" fill="#000"/><rect x="1072.8" y="734.0" width="177.1" height="3.8" fill="#000"/><rect x="1072.8" y="741.0" width="81.2" height="2.9" fill="#000"/><rect x="1072.8" y="749.0" width="156.2" height="4.0" fill="#000"/><rect x="1072.8" y="755.0" width="93.2" height="3.9" fill="#000"/><rect x="1072.8" y="763.0" width="154.2" height="4.0" fill="#000"/><rect x="1285.0" y="508.0" width="204.0" height="1.0" fill="#968ef0"/><rect x="1285.0" y="508.0" width="1.0" height="290.0" fill="#968ef0"/><rect x="1488.0" y="508.0" width="1.0" height="290.0" fill="#968ef0"/><rect x="1284.0" y="799.0" width="206.0" height="1.0" fill="#968ef0"/><rect x="1284.0" y="507.0" width="206.0" height="1.0" fill="#3026a0"/><rect x="1284.0" y="507.0" width="1.0" height="292.0" fill="#3026a0"/><rect x="1489.0" y="507.0" width="1.0" height="292.0" fill="#3026a0"/><rect x="1284.0" y="798.0" width="206.0" height="1.0" fill="#3026a0"/><rect x="1303.0" y="511.0" width="183.0" height="2.0" fill="#0a0a0a"/><rect x="1303.0" y="511.0" width="2.0" height="283.5" fill="#0a0a0a"/><rect x="1484.0" y="511.0" width="2.0" height="283.5" fill="#0a0a0a"/><rect x="1303.0" y="792.5" width="183.0" height="2.0" fill="#0a0a0a"/><rect x="1291.1" y="709.0" width="12.9" height="85.5" fill="#0a0a0a"/><rect x="1292.6" y="710.7" width="10.4" height="22.6" fill="#e2dab8"/><rect x="1294.2" y="712.7" width="3.2" height="18.6" fill="#0a0a0a"/><rect x="1297.4" y="710.7" width="1.2" height="22.6" fill="#0a0a0a"/><rect x="1292.6" y="735.7" width="10.4" height="32.1" fill="#e2dab8"/><rect x="1294.2" y="737.7" width="3.2" height="28.1" fill="#0a0a0a"/><rect x="1297.4" y="735.7" width="1.2" height="32.1" fill="#0a0a0a"/><rect x="1292.6" y="770.2" width="10.4" height="22.1" fill="#e2dab8"/><rect x="1294.2" y="772.2" width="3.2" height="18.1" fill="#0a0a0a"/><rect x="1297.4" y="770.2" width="1.2" height="22.1" fill="#0a0a0a"/><rect x="1303.5" y="777.5" width="181.5" height="2.0" fill="#0a0a0a"/><rect x="1302.5" y="778.5" width="66.3" height="15.0" fill="#0a0a0a"/><rect x="1304.9" y="780.1" width="7.2" height="3.2" fill="#e2dab8"/><rect x="1304.9" y="784.7" width="7.2" height="3.2" fill="#e2dab8"/><rect x="1304.9" y="791.1" width="7.2" height="1.6" fill="#e2dab8"/><rect x="1314.5" y="780.1" width="7.6" height="3.2" fill="#e2dab8"/><rect x="1314.5" y="784.7" width="7.6" height="3.2" fill="#e2dab8"/><rect x="1314.5" y="791.1" width="7.6" height="1.6" fill="#e2dab8"/><rect x="1324.5" y="780.1" width="7.3" height="3.2" fill="#e2dab8"/><rect x="1324.5" y="784.7" width="7.3" height="3.2" fill="#e2dab8"/><rect x="1324.5" y="791.1" width="7.3" height="1.6" fill="#e2dab8"/><rect x="1334.2" y="780.1" width="7.7" height="3.2" fill="#e2dab8"/><rect x="1334.2" y="784.7" width="7.7" height="3.2" fill="#e2dab8"/><rect x="1334.2" y="791.1" width="7.7" height="1.6" fill="#e2dab8"/><rect x="1344.3" y="780.1" width="11.3" height="3.2" fill="#e2dab8"/><rect x="1344.3" y="784.7" width="11.3" height="3.2" fill="#e2dab8"/><rect x="1344.3" y="791.1" width="11.3" height="1.6" fill="#e2dab8"/><rect x="1358.0" y="780.1" width="8.3" height="3.2" fill="#e2dab8"/><rect x="1358.0" y="784.7" width="8.3" height="3.2" fill="#e2dab8"/><rect x="1358.0" y="791.1" width="8.3" height="1.6" fill="#e2dab8"/><rect x="1473.5" y="778.5" width="11.5" height="15.0" fill="#0a0a0a"/><rect x="1475.3" y="783.0" width="8.2" height="1.0" fill="#e2dab8"/><rect x="1476.3" y="786.0" width="5.9" height="5.4" fill="none" stroke="#e2dab8" stroke-width="1"/><rect x="1436.9" y="793.5" width="13.7" height="3.8" fill="#000"/><rect x="1348.0" y="530.1" width="92.9" height="4.7" fill="#000"/><rect x="1390.3" y="534.8" width="8.6" height="5.0" fill="#000"/><path d="M1321.5 579.3 L1322.2 566.5 L1323.0 566.5 L1323.7 579.3Z M1321.5 601.6 L1322.2 614.2 L1323.0 614.2 L1323.7 601.6Z M1324.8 579.3 L1325.5 566.5 L1326.2 566.5 L1327.0 579.3Z M1324.8 601.6 L1325.5 614.2 L1326.2 614.2 L1327.0 601.6Z M1328.0 579.3 L1328.7 566.5 L1329.5 566.5 L1330.2 579.3Z M1328.0 601.6 L1328.7 614.2 L1329.5 614.2 L1330.2 601.6Z M1331.2 579.3 L1332.0 566.5 L1332.8 566.5 L1333.5 579.3Z M1331.2 601.6 L1332.0 614.2 L1332.8 614.2 L1333.5 601.6Z M1334.5 579.3 L1335.2 566.5 L1336.0 566.5 L1336.7 579.3Z M1334.5 601.6 L1335.2 614.2 L1336.0 614.2 L1336.7 601.6Z M1337.8 579.3 L1338.5 566.5 L1339.2 566.5 L1340.0 579.3Z M1337.8 601.6 L1338.5 614.2 L1339.2 614.2 L1340.0 601.6Z M1341.0 579.3 L1341.7 566.5 L1342.5 566.5 L1343.2 579.3Z M1341.0 601.6 L1341.7 614.2 L1342.5 614.2 L1343.2 601.6Z M1344.2 579.3 L1345.0 566.5 L1345.8 566.5 L1346.5 579.3Z M1344.2 601.6 L1345.0 614.2 L1345.8 614.2 L1346.5 601.6Z M1347.5 579.3 L1348.2 566.5 L1349.0 566.5 L1349.7 579.3Z M1347.5 601.6 L1348.2 614.2 L1349.0 614.2 L1349.7 601.6Z M1350.8 579.3 L1351.5 566.5 L1352.2 566.5 L1353.0 579.3Z M1350.8 601.6 L1351.5 614.2 L1352.2 614.2 L1353.0 601.6Z M1354.0 579.3 L1354.7 566.5 L1355.5 566.5 L1356.2 579.3Z M1354.0 601.6 L1354.7 614.2 L1355.5 614.2 L1356.2 601.6Z M1357.2 579.3 L1358.0 566.5 L1358.8 566.5 L1359.5 579.3Z M1357.2 601.6 L1358.0 614.2 L1358.8 614.2 L1359.5 601.6Z M1360.5 579.3 L1361.2 566.5 L1362.0 566.5 L1362.7 579.3Z M1360.5 601.6 L1361.2 614.2 L1362.0 614.2 L1362.7 601.6Z M1363.8 579.3 L1364.5 566.5 L1365.2 566.5 L1366.0 579.3Z M1363.8 601.6 L1364.5 614.2 L1365.2 614.2 L1366.0 601.6Z M1367.0 579.3 L1367.7 566.5 L1368.5 566.5 L1369.2 579.3Z M1367.0 601.6 L1367.7 614.2 L1368.5 614.2 L1369.2 601.6Z M1370.2 579.3 L1371.0 566.5 L1371.8 566.5 L1372.5 579.3Z M1370.2 601.6 L1371.0 614.2 L1371.8 614.2 L1372.5 601.6Z M1373.5 579.3 L1374.2 566.5 L1375.0 566.5 L1375.7 579.3Z M1373.5 601.6 L1374.2 614.2 L1375.0 614.2 L1375.7 601.6Z M1376.8 579.3 L1377.5 566.5 L1378.2 566.5 L1379.0 579.3Z M1376.8 601.6 L1377.5 614.2 L1378.2 614.2 L1379.0 601.6Z M1380.0 579.3 L1380.7 566.5 L1381.5 566.5 L1382.2 579.3Z M1380.0 601.6 L1380.7 614.2 L1381.5 614.2 L1382.2 601.6Z M1383.2 579.3 L1384.0 566.5 L1384.8 566.5 L1385.5 579.3Z M1383.2 601.6 L1384.0 614.2 L1384.8 614.2 L1385.5 601.6Z M1386.5 579.3 L1387.2 566.5 L1388.0 566.5 L1388.7 579.3Z M1386.5 601.6 L1387.2 614.2 L1388.0 614.2 L1388.7 601.6Z M1389.8 579.3 L1390.5 566.5 L1391.2 566.5 L1392.0 579.3Z M1389.8 601.6 L1390.5 614.2 L1391.2 614.2 L1392.0 601.6Z M1393.0 579.3 L1393.7 566.5 L1394.5 566.5 L1395.2 579.3Z M1393.0 601.6 L1393.7 614.2 L1394.5 614.2 L1395.2 601.6Z M1396.2 579.3 L1397.0 566.5 L1397.8 566.5 L1398.5 579.3Z M1396.2 601.6 L1397.0 614.2 L1397.8 614.2 L1398.5 601.6Z M1399.5 579.3 L1400.2 566.5 L1401.0 566.5 L1401.7 579.3Z M1399.5 601.6 L1400.2 614.2 L1401.0 614.2 L1401.7 601.6Z M1402.8 579.3 L1403.5 566.5 L1404.2 566.5 L1405.0 579.3Z M1402.8 601.6 L1403.5 614.2 L1404.2 614.2 L1405.0 601.6Z M1406.0 579.3 L1406.7 566.5 L1407.5 566.5 L1408.2 579.3Z M1406.0 601.6 L1406.7 614.2 L1407.5 614.2 L1408.2 601.6Z M1409.2 579.3 L1410.0 566.5 L1410.8 566.5 L1411.5 579.3Z M1409.2 601.6 L1410.0 614.2 L1410.8 614.2 L1411.5 601.6Z M1412.5 579.3 L1413.2 566.5 L1414.0 566.5 L1414.7 579.3Z M1412.5 601.6 L1413.2 614.2 L1414.0 614.2 L1414.7 601.6Z M1415.8 579.3 L1416.5 566.5 L1417.2 566.5 L1418.0 579.3Z M1415.8 601.6 L1416.5 614.2 L1417.2 614.2 L1418.0 601.6Z M1419.0 579.3 L1419.7 566.5 L1420.5 566.5 L1421.2 579.3Z M1419.0 601.6 L1419.7 614.2 L1420.5 614.2 L1421.2 601.6Z M1422.2 579.3 L1423.0 566.5 L1423.8 566.5 L1424.5 579.3Z M1422.2 601.6 L1423.0 614.2 L1423.8 614.2 L1424.5 601.6Z M1425.5 579.3 L1426.2 566.5 L1427.0 566.5 L1427.7 579.3Z M1425.5 601.6 L1426.2 614.2 L1427.0 614.2 L1427.7 601.6Z M1428.8 579.3 L1429.5 566.5 L1430.2 566.5 L1431.0 579.3Z M1428.8 601.6 L1429.5 614.2 L1430.2 614.2 L1431.0 601.6Z M1432.0 579.3 L1432.7 566.5 L1433.5 566.5 L1434.2 579.3Z M1432.0 601.6 L1432.7 614.2 L1433.5 614.2 L1434.2 601.6Z M1435.2 579.3 L1436.0 566.5 L1436.8 566.5 L1437.5 579.3Z M1435.2 601.6 L1436.0 614.2 L1436.8 614.2 L1437.5 601.6Z M1438.5 579.3 L1439.2 566.5 L1440.0 566.5 L1440.7 579.3Z M1438.5 601.6 L1439.2 614.2 L1440.0 614.2 L1440.7 601.6Z M1441.8 579.3 L1442.5 566.5 L1443.2 566.5 L1444.0 579.3Z M1441.8 601.6 L1442.5 614.2 L1443.2 614.2 L1444.0 601.6Z M1445.0 579.3 L1445.7 566.5 L1446.5 566.5 L1447.2 579.3Z M1445.0 601.6 L1445.7 614.2 L1446.5 614.2 L1447.2 601.6Z M1448.2 579.3 L1449.0 566.5 L1449.8 566.5 L1450.5 579.3Z M1448.2 601.6 L1449.0 614.2 L1449.8 614.2 L1450.5 601.6Z M1451.5 579.3 L1452.2 566.5 L1453.0 566.5 L1453.7 579.3Z M1451.5 601.6 L1452.2 614.2 L1453.0 614.2 L1453.7 601.6Z M1454.8 579.3 L1455.5 566.5 L1456.2 566.5 L1457.0 579.3Z M1454.8 601.6 L1455.5 614.2 L1456.2 614.2 L1457.0 601.6Z M1458.0 579.3 L1458.7 566.5 L1459.5 566.5 L1460.2 579.3Z M1458.0 601.6 L1458.7 614.2 L1459.5 614.2 L1460.2 601.6Z M1461.2 579.3 L1462.0 566.5 L1462.8 566.5 L1463.5 579.3Z M1461.2 601.6 L1462.0 614.2 L1462.8 614.2 L1463.5 601.6Z" fill="#2a2820" stroke="#2a2820" stroke-width="0.5"/><path d="M1321.0 579.3 L1465.0 579.3" stroke="#2a261c" stroke-width="1.5" fill="none" /><path d="M1321.0 601.6 L1465.0 601.6" stroke="#2a261c" stroke-width="1.5" fill="none" /><rect x="1319.2" y="579.3" width="146.5" height="22.3" fill="none" stroke="#222" stroke-width="1.2"/><rect x="1465.7" y="578" width="7.3" height="25.4" fill="none" stroke="#222" stroke-width="1.2"/><path d="M1316.7 590.7 L1469.4 590.7" stroke="#5b52dc" stroke-width="1.6" fill="none" stroke-dasharray="9 2 1.5 2"/><circle cx="1393" cy="574.6" r="14.6" fill="none" stroke="#222" stroke-width="1.2"/><path d="M1465.7 566.0 L1480.5 566.0 L1480.5 614.5 L1465.7 614.5" stroke="#2a261c" stroke-width="1.1" fill="none" /><rect x="1469.4" y="587.0" width="3.1" height="7.0" fill="#000"/><rect x="1476.2" y="587.0" width="3.7" height="7.0" fill="#000"/><path d="M1322.0 546.5 L1331.0 546.5 L1337.7 567.0" stroke="#2a261c" stroke-width="1.1" fill="none" /><path d="M1322.0 556.5 L1331.0 556.5 L1337.7 575.0" stroke="#2a261c" stroke-width="1.1" fill="none" /><rect x="1320.0" y="545.0" width="2.5" height="3.0" fill="#000"/><rect x="1320.0" y="555.0" width="2.5" height="3.0" fill="#000"/><path d="M1399.0 575.0 L1402.0 564.0 L1407.6 563.9" stroke="#2a261c" stroke-width="1.1" fill="none" /><rect x="1410.0" y="562.6" width="3.0" height="3.1" fill="#000"/><rect x="1308.0" y="573.0" width="4.0" height="2.5" fill="#000"/><path d="M1310.0 575.0 L1310.0 580.0 L1319.0 580.0" stroke="#2a261c" stroke-width="1.1" fill="none" /><rect x="1390.0" y="640.0" width="9.0" height="4.8" fill="#000"/><rect x="1392.9" y="636.8" width="3.1" height="3.2" fill="#000"/><rect x="1381.0" y="655.3" width="5.0" height="3.4" fill="#000"/><rect x="1406.0" y="655.3" width="4.6" height="3.4" fill="#000"/><path d="M1368.3 689.7 A30 30 0 0 0 1425.7 689.7" fill="none" stroke="#222" stroke-width="1.3"/><rect x="1368.3" y="689.7" width="57.4" height="3.7" fill="url(#hatch)" stroke="#222" stroke-width="0.9"/><path d="M1371.0 689.7 L1372.3 665.5 L1373.3 665.5 L1374.6 689.7" fill="#5a5644" stroke="#1a1a1a" stroke-width="1"/><path d="M1377.9 689.7 L1379.2 665.5 L1380.2 665.5 L1381.5 689.7" fill="#5a5644" stroke="#1a1a1a" stroke-width="1"/><path d="M1384.9 689.7 L1386.2 665.5 L1387.2 665.5 L1388.5 689.7" fill="#5a5644" stroke="#1a1a1a" stroke-width="1"/><path d="M1392.0 689.7 L1393.3 665.5 L1394.3 665.5 L1395.6 689.7" fill="#5a5644" stroke="#1a1a1a" stroke-width="1"/><path d="M1398.8 689.7 L1400.1 665.5 L1401.1 665.5 L1402.4 689.7" fill="#5a5644" stroke="#1a1a1a" stroke-width="1"/><path d="M1405.7 689.7 L1407.0 665.5 L1408.0 665.5 L1409.3 689.7" fill="#5a5644" stroke="#1a1a1a" stroke-width="1"/><path d="M1412.5 689.7 L1413.8 665.5 L1414.8 665.5 L1416.1 689.7" fill="#5a5644" stroke="#1a1a1a" stroke-width="1"/><path d="M1419.3 689.7 L1420.6 665.5 L1421.6 665.5 L1422.9 689.7" fill="#5a5644" stroke="#1a1a1a" stroke-width="1"/><path d="M1378.0 660.0 L1381.0 659.0 L1387.0 659.0 L1389.0 660.0" stroke="#2a261c" stroke-width="1.1" fill="none" /><path d="M1399.7 659.2 L1408.0 659.2" stroke="#2a261c" stroke-width="1.1" fill="none" /><path d="M1399.7 659.2 L1399.7 705.7 L1408.4 705.7" stroke="#2a261c" stroke-width="1.6" fill="none" /><rect x="1403.0" y="700.2" width="5.0" height="3.8" fill="#000"/><path d="M1351.9 713.4 L1441.0 713.4" stroke="#5b52dc" stroke-width="1.6" fill="none" stroke-dasharray="7 2 1.5 2"/><rect x="1313.0" y="753.6" width="23.0" height="3.4" fill="#000"/><rect x="1313.0" y="759.0" width="104.9" height="4.7" fill="#000"/><rect x="1313.0" y="765.5" width="43.0" height="3.5" fill="#000"/></svg><!--/CANVAS-->
<div id="canright" class="a"></div><div id="rightb" class="a"></div>
<div id="stat" class="a"></div>
<div id="stat2" class="a"></div>
<div id="stat3" class="a"></div>

<!-- TITLE BAR -->
<div class="a" style="left:4px;top:4px;width:40px;height:40px;background:linear-gradient(#e6e6e6,#9a9a9a);border:1px solid #000"></div>
<svg class="a" style="left:4px;top:4px" width="40" height="40" viewBox="0 0 40 40">
<path d="M4 29 L13 3 L20 3 L28 29 L22 29 L20 22 L12 22 L10 29 Z M13.5 17 L18.5 17 L16 9 Z" fill="#c8262b"/>
<path d="M30 18 L37 18 L33.5 22 Z" fill="#333"/>
</svg>
<svg class="a" style="left:50px;top:6px" width="260" height="20" viewBox="0 0 260 20">
<path d="M3 3 h10 l6 6 v6 h-16z" fill="#dcdcdc"/><path d="M13 3 v6 h6z" fill="#f2f2f2"/><path d="M13 3 v6 h6" fill="none" stroke="#9a9a9a" stroke-width="0.6"/>
<path d="M27 3.5 h6 l2 2 h7 v3 h-15z" fill="#c4c4c4"/><path d="M29.5 9 h14 l-3.5 6 h-13.5z" fill="#dcdcdc"/>
<rect x="51" y="1" width="16" height="16" fill="#a9a9a9"/><rect x="54" y="1" width="10" height="6" fill="#ececec"/><rect x="54" y="10" width="10" height="7" fill="#222832"/><rect x="56" y="12" width="5" height="4" fill="#ececec"/>
<rect x="75" y="1" width="16" height="16" fill="#a9a9a9"/><rect x="78" y="1" width="10" height="6" fill="#ececec"/><rect x="78" y="10" width="6" height="7" fill="#222832"/><rect x="79" y="12" width="3" height="4" fill="#ececec"/>
<path d="M84 17 l7 -8 l3 2.5 l-7 8 h-3z" fill="#f2c879"/><path d="M91 9 l2 -2 l3 2.5 l-2 2z" fill="#e05a5a"/>
<rect x="100" y="1" width="10.5" height="16" rx="1" fill="#c4c4c4"/><rect x="101.5" y="3" width="7.5" height="11" fill="#6a6a6a"/>
<path d="M104.5 11 h4 l1 1.5 h5.5 v5 h-10.5z" fill="#f2c879"/>
<rect x="124.5" y="1" width="12" height="16" rx="1" fill="#dcdcdc"/><rect x="126" y="3" width="9" height="11" fill="#4a5260"/>
<path d="M122 7.5 h6 v-2.5 l4 3.5 l-4 3.5 v-2.5 h-6z" fill="#5eb4f0"/>
<rect x="149.5" y="1" width="11" height="5" fill="#ececec"/><rect x="147" y="6" width="16" height="9" rx="1" fill="#ececec"/><rect x="150" y="11.5" width="10" height="6" fill="#7fc4f2"/>
<g fill="#dcdcdc">
<path d="M171 10 l6 -5 v3 h5 q5 0 5 6 q-2 -3 -5 -3 h-5 v3z"/>
<path d="M193 8 h6 l-3 3z" />
<path d="M223 10 l-6 -5 v3 h-5 q-5 0 -5 6 q2 -3 5 -3 h5 v3z" fill="#5a626e"/>
<path d="M229 8 h6 l-3 3z" fill="#8a9099"/>
<rect x="243" y="5" width="9" height="2"/><path d="M243 9 h9 l-4.5 4z"/>
</g></svg>
<div class="t" style="left:401px;top:7px;color:#e4e7ea">Autodesk AutoCAD 2020&nbsp;&nbsp;&nbsp;Чертеж энергетического калорифера СП-135.dwg</div>
<svg class="a" style="left:918px;top:11px" width="8" height="10"><path d="M2 0 L7 4.5 L2 9Z" fill="#c8ccd2"/></svg>
<div class="a" style="left:930px;top:5px;width:178px;height:20px;background:#3f4656"></div>
<div class="t" style="left:932px;top:8px;color:#a2a8b2;font-style:italic;font-size:10.9px">Введите ключевое слово/фразу</div>
<svg class="a" style="left:1112px;top:7px" width="250" height="18" viewBox="0 0 250 18">
<g fill="#e0e0e0">
<path d="M2 5 h5 v11 h-5z M9 5 h5 v11 h-5z M3 2 h3 v3 h-3z M10 2 h3 v3 h-3z M6 7 h3 v3 h-3z"/>
<circle cx="33" cy="5" r="4"/><path d="M26 16 q0 -6 7 -6 q7 0 7 6z"/>
<path d="M150 3 h2 l1 2 h10 l-2 6 h-8z M153 13 a1.5 1.5 0 1 0 0.1 0z M160 13 a1.5 1.5 0 1 0 0.1 0z"/>
<path d="M179 3 l6 10 h-12z" fill="none" stroke="#e0e0e0" stroke-width="1.6"/><circle cx="179" cy="3" r="2" fill="#e0e0e0"/><circle cx="173" cy="13" r="2" fill="#e0e0e0"/><circle cx="185" cy="13" r="2" fill="#e0e0e0"/>
<path d="M191 7 h6 l-3 3z"/>
<path d="M132 7 h6 l-3 3z"/>
<path d="M242 7 h6 l-3 3z"/>
</g>
<rect x="208" y="2" width="1" height="16" fill="#444b57"/>
<circle cx="225" cy="8" r="7.5" fill="#e8e8e8"/><text x="225" y="12.5" text-anchor="middle" font-family="Liberation Sans" font-weight="bold" font-size="12" fill="#1f5fa8">?</text>
</svg>
<div class="t" style="left:1158px;top:9px;color:#e4e7ea">Вход в службы</div>
<svg class="a" style="left:1420px;top:4px" width="72" height="22" viewBox="0 0 72 22">
<g stroke="#e0e0e0" stroke-width="1.8" fill="none">
<path d="M8 15.5 h9"/>
<rect x="31.5" y="5.5" width="11.5" height="10.5"/>
<path d="M56 4.5 l11 11 M67 4.5 l-11 11"/>
</g></svg>
<!-- RIBBON TABS -->
<div class="a" style="left:49px;top:31px;width:62px;height:17px;background:#3b4453;border-radius:2px 2px 0 0"></div>
<div class="t" style="top:32px;left:58px;color:#f2f4f6">Главная</div>
<div class="t" style="top:32px;left:122px;color:#c9ced6">Вставка</div>
<div class="t" style="top:32px;left:184px;color:#c9ced6">Аннотации</div>
<div class="t" style="top:32px;left:265px;color:#c9ced6">Параметризация</div>
<div class="t" style="top:32px;left:378px;color:#c9ced6">3D-инструменты</div>
<div class="t" style="top:32px;left:491px;color:#c9ced6">Визуализация</div>
<div class="t" style="top:32px;left:587px;color:#c9ced6">Вид</div>
<div class="t" style="top:32px;left:627px;color:#c9ced6">Управление</div>
<div class="t" style="top:32px;left:713px;color:#c9ced6">Вывод</div>
<div class="t" style="top:32px;left:768px;color:#c9ced6">Надстройки</div>
<div class="t" style="top:32px;left:854px;color:#c9ced6">Совместная работа</div>
<div class="t" style="top:32px;left:981px;color:#c9ced6">Рекомендованные приложения</div>
<div class="t" style="top:32px;left:1176px;color:#c9ced6">Express Tools</div>
<div class="t" style="top:32px;left:1265px;color:#c9ced6">Raster Tools</div>
<svg class="a" style="left:1358px;top:34px" width="28" height="10"><rect x="1" y="1" width="13" height="7" rx="2" fill="#e0e0e0"/><path d="M5 6 l2.5 -3 l2.5 3z" fill="#222832"/><path d="M19 3.5 h6 l-3 3z" fill="#e0e0e0"/></svg>


<!-- FILE TABS -->
<svg class="a" style="left:0;top:151px" width="460" height="26" viewBox="0 0 460 26">
<path d="M16 21 Q22 21 24 12 Q26 1 34 1 H140 Q146 1 146 8 V21 Z" fill="#363d49"/>
<path d="M140 26 Q148 26 150 12 Q152 1 160 1 H410 Q418 1 420 12 Q422 26 430 26Z" fill="#3b4453"/>
<path d="M422 21 Q428 21 430 12 Q432 3 438 3 H444 Q448 3 447 10 Q444 21 436 21Z" fill="#363d49"/>
<path d="M433 11 h8 M437 7 v8" stroke="#c8ccd2" stroke-width="2"/>
<path d="M398 6.5 l7 7 M405 6.5 l-7 7" stroke="#c8ccd2" stroke-width="1.6"/>
</svg>
<div class="a" style="left:3px;top:172px;width:1491px;height:4px;background:#3b4453"></div><div class="a" style="left:3px;top:176px;width:1491px;height:1px;background:#34362f"></div>
<div class="t" style="left:35px;top:157px;color:#c3c8d0">Начало</div>
<div class="t" style="left:159px;top:156px;color:#eef0f3;letter-spacing:-0.12px">Чертеж энергетиче...калорифера СП-135*</div>
<!-- RIBBON SEPARATORS -->
<div class="sep" style="left:265px"></div>
<div class="sep" style="left:398px"></div>
<div class="sep" style="left:538px"></div>
<div class="sep" style="left:809px"></div>
<div class="sep" style="left:895px"></div>
<div class="sep" style="left:1138px"></div>
<div class="sep" style="left:1213px"></div>
<div class="sep" style="left:1319px"></div>
<div class="sep" style="left:1419px"></div>
<!-- PANEL LABELS -->
<div class="pl" style="left:98px">Рисование<i class="arr"></i></div>
<div class="pl" style="left:281px">Редактирование<i class="arr"></i></div>
<div class="pl" style="left:431px">Аннотации<i class="arr"></i></div>
<div class="pl" style="left:652px">Слои<i class="arr"></i></div>
<div class="pl" style="left:832px">Блок<i class="arr"></i></div>
<div class="pl" style="left:980px">Свойства<i class="arr"></i></div>
<div class="pl" style="left:1148px">Группы<i class="arr"></i></div>
<div class="pl" style="left:1236px">Утилиты<i class="arr"></i></div>
<div class="pl" style="left:1330px">Буфер обмена</div>
<div class="pl" style="left:1431px">Вид<i class="arr"></i></div>
<!-- BIG BUTTON LABELS -->
<div class="t" style="left:10px;top:92px">Отрезок</div>
<div class="t" style="left:61px;top:92px">Полилиния</div>
<div class="t" style="left:139px;top:92px">Круг</div>
<div class="t" style="left:186px;top:92px">Дуга</div>
<div class="t" style="left:412px;top:92px">Текст</div>
<div class="t" style="left:456px;top:92px">Размер</div>
<div class="t" style="left:544px;top:92px">Свойства</div>
<div class="t" style="left:557px;top:107px">слоя</div>
<div class="t" style="left:813px;top:91px">Вставка</div>
<div class="t" style="left:901px;top:92px">Копирование</div>
<div class="t" style="left:917px;top:107px">свойств</div>
<div class="t" style="left:1144px;top:92px">Группа</div>
<div class="t" style="left:1227px;top:92px">Измерить</div>
<div class="t" style="left:1333px;top:92px">Вставить</div>
<div class="t" style="left:1431px;top:92px">Базовый</div>
<!-- dropdowns -->
<div class="a" style="left:600px;top:55px;width:206px;height:20px;background:#4b5466;border:1px solid #343b47"></div>
<div class="t" style="left:681px;top:58px;color:#f0f0f0">0</div>
<div class="a" style="left:1000px;top:55px;width:135px;height:20px;background:#4b5466;border:1px solid #343b47"></div>
<div class="a" style="left:1000px;top:78px;width:135px;height:20px;background:#4b5466;border:1px solid #343b47"></div>
<div class="a" style="left:1000px;top:102px;width:135px;height:20px;background:#4b5466;border:1px solid #343b47"></div>
<div class="t" style="left:1038px;top:58px;color:#eef0f2">ПоСлою</div>
<div class="t" style="left:1069px;top:81px;color:#eef0f2;width:46px;overflow:hidden">ПоСлою</div>
<div class="t" style="left:1069px;top:105px;color:#eef0f2">ПоСл...</div>
<svg class="a" style="left:0;top:0" width="1497" height="150" viewBox="0 0 1497 150">
<defs>
<g id="dd"><path d="M-3.5 -1.5 h7 l-3.5 4z" fill="#d6d9de"/></g>
</defs>
<g fill="#d6d9de">
<use href="#dd" x="151" y="110"/><use href="#dd" x="198" y="110"/><use href="#dd" x="427" y="110"/><use href="#dd" x="833" y="109"/>
<use href="#dd" x="1254" y="110"/><use href="#dd" x="1357" y="110"/><use href="#dd" x="1454" y="110"/>
<use href="#dd" x="252" y="65"/><use href="#dd" x="252" y="89"/><use href="#dd" x="252" y="112"/>
<use href="#dd" x="357" y="65"/><use href="#dd" x="357" y="89"/><use href="#dd" x="357" y="113"/>
<use href="#dd" x="530" y="65"/><use href="#dd" x="530" y="89"/>
<use href="#dd" x="887" y="112"/>
<use href="#dd" x="801" y="65"/><use href="#dd" x="1129" y="65"/><use href="#dd" x="1129" y="88"/><use href="#dd" x="1129" y="112"/>
</g>
<!-- corner launchers -->
<path d="M1127 135 l5 5 M1132 136 v4 h-4" stroke="#c8ccd2" stroke-width="1" fill="none"/>
<path d="M1478 135 l5 5 M1483 136 v4 h-4" stroke="#c8ccd2" stroke-width="1" fill="none"/>
<!-- DRAW PANEL -->
<g stroke="#e6e6e6" stroke-width="1.1" fill="none">
<path d="M18 86 L46 58"/>
<path d="M79 79.5 H98.5 M98.5 64.5 A9 7.5 0 0 1 98.5 79.5"/>
<circle cx="151.5" cy="71.3" r="15.5"/>
<path d="M186.5 85.5 Q190 66 213.5 58.5"/>
<rect x="228" y="60" width="14" height="10"/>
<ellipse cx="235" cy="88.6" rx="7.5" ry="5" stroke-dasharray="8 3"/>
<rect x="229" y="106" width="12" height="13"/>
<path d="M226 106 h18 M226 119 h18 M229 103 v19 M241 103 v19"/>
</g>
<rect x="230" y="107" width="10" height="11" fill="#5b7fa0"/><path d="M230 116 l9 -9 M230 112 l5 -5 M233 118 l7 -7 M237 118 l3 -3" stroke="#8fc8f0" stroke-width="0.8"/>
<path d="M152 71 L160 63 M156.5 62.5 h4 v4" stroke="#5eb4f0" stroke-width="1.4" fill="none"/>
<g fill="#5eb4f0">
<rect x="16" y="84.5" width="3.5" height="3.5"/><rect x="44.5" y="55.5" width="3.5" height="3.5"/>
<rect x="77" y="78" width="3.5" height="3.5"/><rect x="97" y="78" width="3.5" height="3.5"/><rect x="97" y="62.5" width="3.5" height="3.5"/>
<rect x="149.8" y="69.5" width="3.5" height="3.5"/>
<rect x="184.5" y="84" width="3.5" height="3.5"/><rect x="193" y="64.5" width="3.5" height="3.5"/><rect x="212" y="56.5" width="3.5" height="3.5"/>
</g>
<rect x="226.5" y="58.5" width="3" height="3" fill="#e6e6e6"/><rect x="240.5" y="68.5" width="3" height="3" fill="#e6e6e6"/>
<circle cx="235" cy="88.6" r="1.2" fill="#e6e6e6"/><circle cx="242.5" cy="88.6" r="1.2" fill="#5eb4f0"/>
<!-- EDIT PANEL -->
<g fill="#e8e8e8">
<path d="M280 56 l4 4 h-3 v3.5 h3.5 v-3 l4 4 l-4 4 v-3 h-3.5 v3.5 h3 l-4 4 l-4 -4 h3 v-3.5 h-3.5 v3 l-4 -4 l4 -4 v3 h3.5 v-3.5 h-3z"/>
</g>
<g stroke="#e8e8e8" stroke-width="1.5" fill="none">
<path d="M316 61 A7 7 0 1 1 309 57.5"/>
<path d="M333 57 h12" stroke-dasharray="2 1.5"/>
<path d="M336 58 l6 9 M342 58 l-6 9"/>
<circle cx="336" cy="69.5" r="2.5"/><circle cx="342" cy="69.5" r="2.5"/>
<path d="M306 97 l4 -14 v14z"/>
<path d="M332 98 v-5 q0 -8 8 -9 h6" stroke-dasharray="14 1.5 2 1.5 20"/>
<rect x="303" y="105" width="15" height="15"/>
<rect x="303" y="113" width="7" height="7"/>
<path d="M273 106 h6 l5 14 h-11z"/>
<path d="M278 118 h5 l-2 -2 M281 120 l2 -2"/>
<circle cx="277" cy="83" r="2.5"/>
<path d="M281 83 h5 v5 l-2 -2 m2 2 l2 -2"/>
</g>
<g stroke="#5eb4f0" stroke-width="1.5" fill="none">
<circle cx="278" cy="93" r="3"/><circle cx="283" cy="93" r="3"/>
<path d="M312 97 v-14 l5 14z"/>
<path d="M374 85 h10 l3 -3 h-10z M374 85 v10 h10 v-10 M384 95 l3 -3 v-10"/>
<rect x="333" y="106" width="5" height="5"/><rect x="341" y="106" width="5" height="5"/><rect x="333" y="114" width="5" height="5"/><rect x="341" y="114" width="5" height="5"/>
<path d="M388 106 h-7 a6 6 0 0 0 0 13 h7 M388 109 h-7 a3.5 3.5 0 0 0 0 7 h7"/>
<path d="M374 69.5 h14"/>
</g>
<path d="M376 68 l9 -11 l4 3 l-9 11z" fill="#f2c879"/><circle cx="377" cy="68" r="2.5" fill="#e05a5a"/>
<!-- ANNOTATION PANEL -->
<path d="M414 86 L424 58 H430 L440 86 H435 L432.5 79 H421.5 L419 86Z M423 74.5 H431 L427 63Z" fill="#e8e8e8"/>
<g stroke="#e8e8e8" stroke-width="1.3" fill="none">
<path d="M460 56 v31 M492 56 v31 M460 62 h32 M464 60 l-4 2 l4 2 M488 60 l4 2 l-4 2"/>
</g>
<g fill="#f2c879">
<path d="M475 71 h2 l-0.5 6 h-1z"/>
<path d="M466.5 75.5 l1.5 -1.2 l3.8 4.5 l-0.8 0.7z"/>
<path d="M485.5 75.5 l-1.5 -1.2 l-3.8 4.5 l0.8 0.7z"/>
<path d="M463 83 v-2 l6 0.5 v1z"/>
<path d="M489 83 v-2 l-6 0.5 v1z"/>
</g>
<g stroke="#e8e8e8" stroke-width="1.1" fill="none"><path d="M504 57 v14 M520 57 v14"/></g><g stroke="#5eb4f0" stroke-width="1.1" fill="none"><path d="M504.5 63 h15 M507 61 l-2.5 2 l2.5 2 M517 61 l2.5 2 l-2.5 2"/></g>
<g stroke="#e8e8e8" stroke-width="1.3" fill="none">
<path d="M504 95 l9 -6"/><circle cx="515.5" cy="85.5" r="3.2"/><path d="M504 95 l1 -4 M504 95 l4 0"/>
<rect x="504" y="106" width="16" height="13"/><path d="M504 110 h16 M504 114 h16 M510 106 v13 M515 106 v13"/>
</g>
<!-- LAYERS -->
<g fill="#d8d8d8">
<path d="M553 65 l8 -8 h20 l-8 8z"/><path d="M553 72 l7 -6 h13 l-3 6z" fill="#cfcfcf"/><path d="M553 79 l7 -6 h10 l-0 6z"/>
</g>
<rect x="572.5" y="68" width="14" height="20" rx="1" fill="#ececec"/><rect x="574.5" y="70" width="10" height="8" fill="#7fc4f2"/>
<path d="M576 81.5 h7 l-2 -1.5 M583 84.5 h-7 l2 1.5" stroke="#555" stroke-width="1" fill="none"/>
<circle cx="611" cy="63" r="4.5" fill="#f2c879"/><rect x="609" y="67" width="4" height="4" fill="#e8e8e8"/>
<circle cx="629" cy="65" r="3.5" fill="#f2c879"/><path d="M629 58 v3 M629 69 v3 M622 65 h3 M633 65 h3 M624 60 l2 2 M632 68 l2 2 M624 70 l2 -2 M632 62 l2 -2" stroke="#f2c879" stroke-width="1.2"/>
<rect x="642" y="64" width="11" height="8" fill="#f2c879"/><path d="M650 64 v-3 a3 3 0 0 0 -6 0" stroke="#f2c879" stroke-width="1.6" fill="none"/>
<rect x="662" y="58.5" width="14" height="14" fill="#000"/>
<g id="lrow">
<path d="M604 89 l5 -4 h10 l-5 4z" fill="#cfcfcf"/><circle cx="614" cy="92" r="3" fill="#5ed0e0"/>
<path d="M628 87 l5 -4 h10 l-5 4z M628 90 l5 -4 h10 l-5 4z M628 93 l5 -4 h10 l-5 4z" fill="#cfcfcf"/><path d="M637 96 l5 -5" stroke="#e8e8e8" stroke-width="1.3"/>
<path d="M652 87 l5 -4 h10 l-5 4z" fill="#cfcfcf"/><circle cx="662" cy="92" r="3" fill="none" stroke="#5ed0e0" stroke-width="1.3"/>
<path d="M676 87 l5 -4 h10 l-5 4z" fill="#cfcfcf"/><rect x="683" y="91" width="7" height="6" fill="#5ed0e0"/>
<path d="M700 89 l5 -4 h10 l-5 4z M700 92 l5 -4 h10 l-5 4z" fill="#cfcfcf"/><path d="M700 95 l5 -4 h10 l-5 4z" fill="#5eb4f0"/><circle cx="707" cy="84" r="3" fill="#cfcfcf"/>
</g>
<path d="M604 112 l5 -4 h10 l-5 4z M604 115 l5 -4 h10 l-5 4z" fill="#cfcfcf"/><circle cx="614" cy="116" r="3.5" fill="#f2c879"/>
<path d="M628 110 l5 -4 h10 l-5 4z M628 113 l5 -4 h10 l-5 4z M628 116 l5 -4 h10 l-5 4z" fill="#cfcfcf"/><path d="M637 119 l5 -5" stroke="#e8e8e8" stroke-width="1.3"/>
<path d="M652 110 l5 -4 h10 l-5 4z M652 113 l5 -4 h10 l-5 4z" fill="#cfcfcf"/><circle cx="662" cy="116" r="3" fill="#f2c879"/>
<path d="M676 110 l5 -4 h10 l-5 4z" fill="#cfcfcf"/><rect x="683" y="114" width="7" height="6" fill="#f2c879"/>
<path d="M700 110 l5 -4 h10 l-5 4z M700 113 l5 -4 h10 l-5 4z M700 116 l5 -4 h10 l-5 4z" fill="#cfcfcf"/><path d="M707 119 l6 -6 l2 2 l-6 6z" fill="#f2c879"/>
<!-- BLOCK -->
<path d="M836 54 h10 l5 5 v21 h-15z" fill="#8ac8f5"/>
<rect x="819" y="63" width="22" height="17" fill="#5a616d" stroke="#c8c8c8" stroke-width="1.2"/>
<circle cx="840" cy="80" r="6" fill="none" stroke="#c8c8c8" stroke-width="1.2"/>
<g stroke="#d8d8d8" stroke-width="1.2" fill="none">
<rect x="862" y="61" width="11" height="8"/><circle cx="872" cy="68" r="3"/>
<rect x="862" y="85" width="11" height="8"/><circle cx="872" cy="92" r="3"/>
</g>
<circle cx="876" cy="59" r="3" fill="#f2c879"/>
<path d="M871 90 l5 -6 l2 2 l-5 6z" fill="#f2c879"/><path d="M876 84 l1.5 -1.5 l2 2 l-1.5 1.5z" fill="#e05a5a"/>
<path d="M862 108 l5 -3 l8 8 l-6 6z" fill="#e0e0e0"/><path d="M869 114 l6 -7 l2 2 l-6 7z" fill="#f2c879"/>
<!-- PROPERTIES -->
<rect x="924" y="56" width="20" height="30" fill="#dcdcdc"/><rect x="927" y="59" width="14" height="9" fill="#8ac8f5"/>
<path d="M927 73 h6 M929 71 v4 M927 78 h8 M931 76 v4" stroke="#555" stroke-width="1.2"/>
<path d="M938 83 l8 -8 l5 5 l-8 8z" fill="#f2c879"/><path d="M946 75 l4 -4 l5 5 l-4 4z" fill="#e0e0e0"/>
<circle cx="989" cy="64" r="8" fill="#e05050"/>
<path d="M989 64 L989 56 A8 8 0 0 1 996 60z" fill="#f2a040"/>
<path d="M989 64 L996 60 A8 8 0 0 1 996 68z" fill="#f2d040"/>
<path d="M989 64 L996 68 A8 8 0 0 1 989 72z" fill="#60c060"/>
<path d="M989 64 L989 72 A8 8 0 0 1 982 68z" fill="#40a0e0"/>
<path d="M989 64 L982 68 A8 8 0 0 1 982 60z" fill="#a060d0"/>
<g fill="#e0e0e0"><rect x="981" y="80" width="16" height="2"/><rect x="981" y="85" width="16" height="3"/><rect x="981" y="91" width="16" height="4"/></g>
<g stroke="#e0e0e0" stroke-width="1.2"><path d="M981 105 h16 M981 110 h16 M981 115 h16 M981 119 h16" stroke-dasharray="2 1"/></g>
<rect x="1012" y="57.5" width="16" height="16" fill="#000" stroke="#9aa0a8" stroke-width="0.8"/>
<path d="M1003 87 h63 M1003 111 h63" stroke="#f0f0f0" stroke-width="1.3"/>
<!-- GROUPS -->
<path d="M1151 62 h-3 v26 h3 M1177 62 h3 v26 h-3" stroke="#e0e0e0" stroke-width="1.3" fill="none"/>
<rect x="1155" y="65" width="11" height="8" fill="#5eb4f0" stroke="#cfcfcf" stroke-width="0.8"/>
<circle cx="1160" cy="80" r="5" fill="#9a9a9a" stroke="#cfcfcf" stroke-width="0.8"/>
<path d="M1174 58 l2 4 l4 -2 l-2 4 l4 2 l-4 1 l2 4 l-4 -2 l-2 4 l-1 -4 l-4 2 l2 -4 l-4 -1 l4 -2 l-2 -4 l4 2z" fill="#f2c879"/>
<g stroke="#e0e0e0" stroke-width="1.1" fill="none"><path d="M1194 58 h-1.5 v13 h1.5 M1203 58 h1.5 v13 h-1.5 M1194 82 h-1.5 v13 h1.5 M1203 82 h1.5 v13 h-1.5 M1194 106 h-1.5 v13 h1.5 M1203 106 h1.5 v13 h-1.5"/></g>
<rect x="1195" y="60" width="6" height="4" fill="#5eb4f0"/><circle cx="1198" cy="68" r="2.5" fill="#9a9a9a"/>
<path d="M1201 63 l6 6 M1207 63 l-6 6" stroke="#e05a5a" stroke-width="1.5"/>
<rect x="1195" y="84" width="6" height="4" fill="#5eb4f0"/><circle cx="1198" cy="92" r="2.5" fill="#9a9a9a"/>
<path d="M1200 96 l6 -6 l2 2 l-6 6z" fill="#f2c879"/>
<rect x="1195" y="108" width="6" height="4" fill="#5eb4f0"/><circle cx="1198" cy="116" r="2.5" fill="#60c060"/>
<path d="M1201 110 v11 l3 -3 l2 4 l1.5 -1 l-2 -4 h4z" fill="#f0f0f0"/>
<!-- UTILITIES -->
<rect x="1240" y="68" width="29" height="7" fill="#f2c879"/>
<path d="M1243 68 v3 M1246 68 v2 M1249 68 v3 M1252 68 v2 M1255 68 v3 M1258 68 v2 M1261 68 v3 M1264 68 v2" stroke="#3b4453" stroke-width="0.8"/>
<path d="M1297 58 v12 l3 -3 l2 4 l2 -1 l-2 -4 h4z" fill="#f0f0f0"/><rect x="1304" y="63" width="9" height="9" fill="#5eb4f0"/><path d="M1306 66 h5 M1306 69 h5" stroke="#fff" stroke-width="1"/>
<path d="M1303 56 l-2 4 h3 l-2 4" stroke="#f2c879" stroke-width="1.5" fill="none"/>
<rect x="1297" y="82" width="15" height="14" fill="none" stroke="#60c060" stroke-width="1.2" stroke-dasharray="2 1"/><rect x="1300" y="85" width="8" height="9" fill="#60c060"/>
<path d="M1305 88 v10 l2.5 -2.5 l2 3.5 l1.5 -1 l-2 -3 h3.5z" fill="#f0f0f0"/>
<rect x="1298" y="105" width="12" height="15" fill="#d0d0d0"/><rect x="1300" y="107" width="8" height="3" fill="#3b4453"/>
<path d="M1300 112 h2 M1303 112 h2 M1306 112 h2 M1300 115 h2 M1303 115 h2 M1306 115 h2 M1300 118 h2 M1303 118 h2 M1306 118 h2" stroke="#3b4453" stroke-width="1.5"/>
<!-- CLIPBOARD -->
<rect x="1344" y="60" width="21" height="27" fill="#d9a967"/><rect x="1351" y="56" width="8" height="4" fill="#e0e0e0"/>
<path d="M1352 66 h12 l6 6 v16 h-18z" fill="#e0e0e0" stroke="#3b4453" stroke-width="1"/>
<rect x="1398" y="57" width="12" height="14" fill="#d0d0d0"/><path d="M1400 60 h7 M1400 63 h7 M1400 66 h5" stroke="#3b4453" stroke-width="1"/>
<circle cx="1409" cy="69" r="2" fill="none" stroke="#e0e0e0"/><circle cx="1413" cy="69" r="2" fill="none" stroke="#e0e0e0"/>
<path d="M1399 81 h7 v11 h-7z" fill="#d0d0d0"/><path d="M1402 84 h7 l3 3 v9 h-10z" fill="#e0e0e0" stroke="#3b4453" stroke-width="0.8"/>
<!-- VIEW -->
<path d="M1439 60 h13 v9 h19 v15 h-32z" fill="#dcdcdc"/>
</svg>

<!-- CANVAS OVERLAYS -->
<div class="t" style="left:7px;top:184px;color:#1a1a1a;letter-spacing:0.1px">[−][Сверху][2D-каркас]</div>
<svg class="a" style="left:1340px;top:180px" width="154" height="215" viewBox="1340 180 154 215">
<rect x="1432.5" y="192.5" width="11" height="4" fill="#f4f2ea" stroke="#5a5446" stroke-width="1"/>
<rect x="1454.5" y="186.5" width="9" height="9" fill="#f4f2ea" stroke="#5a5446" stroke-width="1"/>
<rect x="1452.5" y="188.5" width="9" height="9" fill="#f4f2ea" stroke="#5a5446" stroke-width="1"/>
<rect x="1455.3" y="191.3" width="3.4" height="3.4" fill="#77746a"/>
<path d="M1474 189 l7.5 6.5 M1481.5 189 l-7.5 6.5" stroke="#5a5446" stroke-width="4.6" stroke-linecap="round"/>
<path d="M1474 189 l7.5 6.5 M1481.5 189 l-7.5 6.5" stroke="#f4f2ea" stroke-width="2.6" stroke-linecap="round"/>
<circle cx="1410.5" cy="283" r="52.5" fill="none" stroke="#e6dfc4" stroke-width="12.5"/>
<rect x="1385.5" y="257.5" width="51" height="51" fill="#e9e5d3" stroke="#8d8878" stroke-width="1.2"/>
<rect x="1395" y="267" width="31.5" height="31.5" fill="#d9d6c8"/>
<text x="1411.5" y="289.5" text-anchor="middle" font-family="Liberation Sans" font-size="17" fill="#7a776c" textLength="44" lengthAdjust="spacingAndGlyphs">Сверху</text>
<g font-family="Liberation Sans" font-size="24" fill="none" stroke="#8f8a7a" stroke-width="0.9" text-anchor="middle">
<text transform="translate(1410 235.5) scale(0.75 1)">С</text>
<text transform="translate(1354.6 291.7) scale(0.75 1)">З</text>
<text transform="translate(1467.2 292) scale(0.75 1)">В</text>
<text transform="translate(1411 349) scale(0.75 1)">Ю</text>
</g>
<rect x="1387" y="370.5" width="46" height="16" rx="3" fill="#e6e0c8"/>
<text x="1391" y="382.5" font-family="Liberation Sans" font-size="11" fill="#77746a">МСК</text>
<path d="M1419 376 h8 l-4 5z" fill="none" stroke="#9a9584" stroke-width="1"/>
</svg>
<!-- UCS -->
<svg class="a" style="left:10px;top:910px" width="90" height="90" viewBox="10 910 90 90">
<g stroke="#151515" stroke-width="1.5" fill="none">
<path d="M23.4 936 V986.3 H74"/>
<rect x="19.2" y="981.3" width="9.5" height="9.4"/>
<path d="M25.5 919.5 l6 6.5 l6 -6.5 M31.5 926 v6"/>
<path d="M78 972.5 l13 12.5 M91 972.5 l-13 12.5"/>
</g></svg>
<!-- crosshair -->
<svg class="a" style="left:1400px;top:910px" width="94" height="97" viewBox="1400 910 94 97">
<path d="M1464.5 921 V1007 M1416 969.5 H1494" stroke="#1a1a1a" stroke-width="1.2"/>
<rect x="1461.5" y="966.5" width="6" height="6" fill="#dfd6b2" stroke="#1a1a1a" stroke-width="1.2"/>
</svg>
<!-- LAYOUT TABS -->
<svg class="a" style="left:0;top:1007px" width="230" height="20" viewBox="0 1007 230 20">
<path d="M13 1007 H85 Q81 1009 80 1020 Q79 1025 74 1025 H24 Q19 1025 18 1020 Q17 1009 13 1007Z" fill="#3b4453"/>
<path d="M84 1007 H139 Q135 1009 134 1020 Q133 1025 128 1025 H95 Q90 1025 89 1020 Q88 1009 84 1007Z" fill="#2d3440"/>
<path d="M138 1007 H195 Q191 1009 190 1020 Q189 1025 184 1025 H149 Q144 1025 143 1020 Q142 1009 138 1007Z" fill="#2d3440"/>
<path d="M201 1009 H220 Q218 1011 216 1018 Q214 1022 210 1022 H200 Q197 1022 198 1018 Q199 1011 201 1009Z" fill="#2d3440"/>
<path d="M204 1016 h9 M208.5 1011.5 v9" stroke="#c8ccd2" stroke-width="2"/>
</svg>
<div class="t" style="left:26px;top:1009px;color:#f2f4f6;font-weight:bold">Модель</div>
<div class="t" style="left:95px;top:1009px;color:#c3c8d0">Лист1</div>
<div class="t" style="left:150px;top:1009px;color:#c3c8d0">Лист2</div>
<!-- STATUS BAR -->
<svg class="a" style="left:840px;top:1007px" width="657" height="29" viewBox="840 1007 657 29">
<g fill="#3a4250">
<rect x="846" y="1009" width="56" height="24"/>
<rect x="905" y="1009" width="63" height="24"/>
<rect x="971" y="1009" width="102" height="24"/>
<rect x="1075" y="1009" width="62" height="24"/>
<rect x="1139" y="1009" width="48" height="24"/>
<rect x="1190" y="1009" width="24" height="24"/>
<rect x="1217" y="1009" width="105" height="24"/>
<rect x="1325" y="1009" width="39" height="24"/>
<rect x="1365" y="1009" width="24" height="24"/>
<rect x="1392" y="1009" width="24" height="24"/>
<rect x="1419" y="1009" width="22" height="24"/>
<rect x="1444" y="1009" width="50" height="24"/>
</g>
<g fill="#5187c2">
<rect x="996" y="1010" width="22" height="22"/>
<rect x="1075" y="1010" width="22" height="22"/>
<rect x="1099" y="1010" width="22" height="22"/>
<rect x="1164" y="1010" width="22" height="22"/>
<rect x="1190" y="1010" width="23" height="22"/>
<rect x="1217" y="1010" width="23" height="22"/>
</g>
<g stroke="#e4e6ea" stroke-width="1.3" fill="none">
<path d="M909 1016.5 h15 M909 1021 h15 M909 1025.5 h15 M912.5 1013 v15 M917 1013 v15 M921 1013 v15"/>
<path d="M976 1013 v15 h15 M976 1022 h6 v6"/>
<circle cx="1005.5" cy="1021.5" r="6"/><path d="M1005 1021.5 h10 M1005 1021.5 l7 -7"/>
<path d="M1078 1027.5 h14 M1078 1027.5 l12 -12"/>
<path d="M1106 1015.5 h11.5 v12.5 h-12.5 v-9.5"/><rect x="1102.5" y="1013.5" width="4" height="4"/>

<path d="M1196 1013 v14 h13 M1193.5 1016 l2.5 -3 l2.5 3 M1206 1024.5 l3 2.5 l-3 2.5"/><path d="M1207 1013 l-3 4 h3.5 l-3 4" stroke-width="1.3"/>
<path d="M1344 1016 l-7 7 M1328 1025 h0"/>
<path d="M1377 1013 v15 M1369.5 1020.5 h15"/>
<rect x="1396" y="1013" width="7" height="7"/><circle cx="1409" cy="1018" r="3.5"/><path d="M1401 1029 l3.5 -6 l3.5 6z"/>
<rect x="1449" y="1014" width="14" height="12"/><path d="M1452 1023 l3 -3 M1460 1017 l-3 3"/>
</g>
<g fill="#e4e6ea">
<circle cx="936" cy="1014" r="1.3"/><circle cx="941" cy="1014" r="1.3"/><circle cx="946" cy="1014" r="1.3"/>
<circle cx="936" cy="1020" r="1.3"/><circle cx="941" cy="1020" r="1.3"/><circle cx="946" cy="1020" r="1.3"/>
<circle cx="936" cy="1026" r="1.3"/><circle cx="941" cy="1026" r="1.3"/><circle cx="946" cy="1026" r="1.3"/>
<path d="M956 1018 h8 l-4 5z"/><path d="M1022 1018 h8 l-4 5z"/><path d="M1060 1018 h8 l-4 5z"/><path d="M1125 1018 h8 l-4 5z"/>
<path d="M1310 1018 h8 l-4 5z"/><path d="M1352 1018 h8 l-4 5z"/>
<rect x="1082.5" y="1018.5" width="3.5" height="3.5"/>
<rect x="1142" y="1014" width="16" height="1.5"/><rect x="1142" y="1017.8" width="16" height="2.2"/><rect x="1142" y="1022.5" width="16" height="4.5"/>
<rect x="1170.5" y="1016.5" width="9" height="9" fill="none" stroke="#e4e6ea" stroke-width="1.2"/><rect x="1173" y="1019" width="10.5" height="10.5"/>
<path d="M1228 1013.5 l7 15 l-7 -4.5 l-7 4.5z"/>
<path d="M1252 1013.5 l7 15 l-7 -4.5 l-7 4.5z"/>
<path d="M1277 1013.5 l7 15 l-7 -4.5 l-7 4.5z"/>
<circle cx="1337" cy="1021" r="6"/>
<rect x="1472" y="1014" width="15" height="2"/><rect x="1472" y="1020" width="15" height="2"/><rect x="1472" y="1026" width="15" height="2"/>
</g>
<circle cx="1337" cy="1021" r="2.5" fill="#3a4250"/>
<path d="M1337 1013 v16 M1329 1021 h16 M1331.3 1015.3 l11.4 11.4 M1342.7 1015.3 l-11.4 11.4" stroke="#e4e6ea" stroke-width="2.2"/>
<circle cx="1337" cy="1021" r="2.3" fill="#3a4250"/>
<circle cx="1235" cy="1016" r="2.6" fill="none" stroke="#e4e6ea" stroke-width="1"/>
<path d="M1259 1011.5 l-3 4 h3.5 l-3 4" stroke="#e4e6ea" stroke-width="1.3" fill="none"/>
<path d="M1167 1014 h5 M1169.5 1011.5 v5" stroke="#e4e6ea" stroke-width="1.3"/>
<rect x="1424" y="1022" width="8" height="6" fill="#f2c060"/><path d="M1425 1015 h10 M1428 1012 v10" stroke="#5eb4f0" stroke-width="1.3"/><path d="M1431 1024 l3 3 l5 -6" stroke="#5ec060" stroke-width="2" fill="none"/>
<path d="M1039 1014 l13 13" stroke="#e05050" stroke-width="1"/><path d="M1045.5 1013 v15" stroke="#60c060" stroke-width="1"/><circle cx="1045.5" cy="1020.5" r="1.6" fill="#3a4250" stroke="#e4e6ea" stroke-width="1"/>
</svg>
<div class="t" style="left:849px;top:1014px;color:#e6e8ec;font-size:11.7px">МОДЕЛЬ</div>
<div class="t" style="left:1293px;top:1014px;color:#e6e8ec;font-weight:bold;font-size:11px">1:1</div>
</body></html>
